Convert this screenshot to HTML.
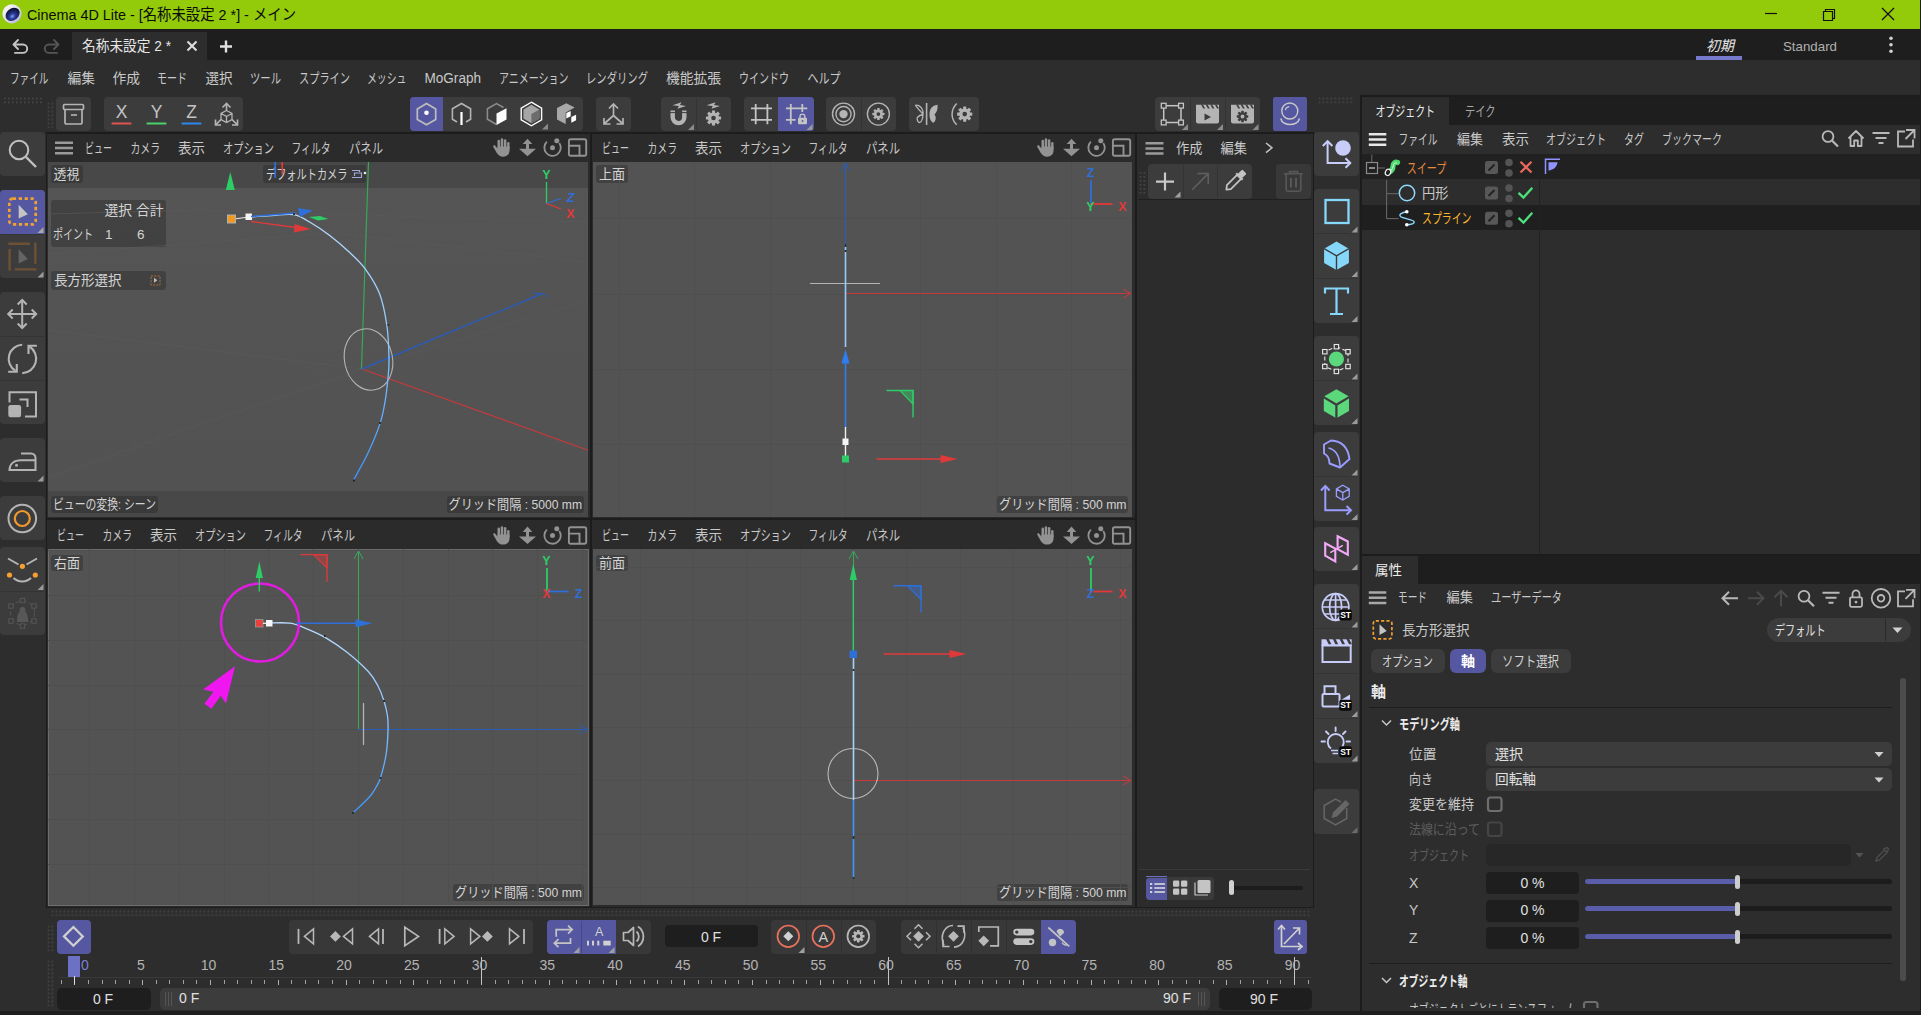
<!DOCTYPE html>
<html lang="ja"><head><meta charset="utf-8"><title>Cinema 4D Lite - [名称未設定 2 *] - メイン</title>
<style>
html,body{margin:0;padding:0;background:#2d2d2d;overflow:hidden}
body{width:1921px;height:1015px;position:relative;font-family:"Liberation Sans","Noto Sans CJK JP",sans-serif}
#app{position:absolute;left:0;top:0;width:1921px;height:1015px;overflow:hidden;background:#2d2d2d}
#app section{position:absolute;left:0;top:0;width:1921px;height:1015px;margin:0;padding:0}
#app div{position:absolute;box-sizing:border-box}
.ov{position:absolute;left:0;top:0}
.ov text{font-family:"Liberation Sans","Noto Sans CJK JP",sans-serif;white-space:pre}
</style></head><body>
<div id="app">
<section id="titlebar">
<div style="left:0px;top:0px;width:1921px;height:29px;background:#93ca09;"></div>
<svg class="ov" width="1921" height="1015" viewBox="0 0 1921 1015">
<text x="27.0" y="20.1" font-size="15.5" fill="#0c0c0c" textLength="269.0" lengthAdjust="spacingAndGlyphs">Cinema 4D Lite - [名称未設定 2 *] - メイン</text>
<defs><radialGradient id="c4d" cx=".4" cy=".62" r=".6"><stop offset="0" stop-color="#7fa0f0"/><stop offset=".35" stop-color="#2b3a9a"/><stop offset="1" stop-color="#0c0e2e"/></radialGradient><linearGradient id="c4r" x1="0" y1="0" x2="1" y2="1"><stop offset="0" stop-color="#ffffff"/><stop offset=".6" stop-color="#d8d8e4"/><stop offset="1" stop-color="#a8a8d8"/></linearGradient></defs><circle cx="12" cy="13.800" r="9.600" fill="url(#c4r)"/><ellipse cx="12.600" cy="14.300" rx="7.600" ry="5.900" transform="rotate(-38 12.600 14.300)" fill="url(#c4d)"/>
<path d="M1765 13.5h12" stroke="#111" stroke-width="1.2" fill="none"/>
<path d="M1823.5 11.5h9v9h-9z M1825.5 11.5v-2h9v9h-2" stroke="#111" stroke-width="1.2" fill="none"/>
<path d="M1882 8l12 12M1894 8l-12 12" stroke="#111" stroke-width="1.3" fill="none"/>
</svg>
</section>
<section id="tabbar">
<div style="left:0px;top:29px;width:1921px;height:31px;background:#1e1e1e;"></div>
<div style="left:72px;top:32px;width:135px;height:28px;background:#2d2d2d;"></div>
<div style="left:1696px;top:56px;width:46px;height:4px;background:#7679cc;"></div>
<svg class="ov" width="1921" height="1015" viewBox="0 0 1921 1015">
<text x="82.0" y="51.2" font-size="14.5" fill="#e6e6e6" textLength="89.0" lengthAdjust="spacingAndGlyphs">名称未設定 2 *</text>
<path d="M187.5 41.5l9 9M196.5 41.5l-9 9" stroke="#e0e0e0" stroke-width="2" fill="none"/>
<path d="M220 46.5h12M226 40.5v12" stroke="#e0e0e0" stroke-width="2.4" fill="none"/>
<path d="M18 40l-4.5 4.5 4.5 4.5M14 44.5h9a4.2 4.2 0 0 1 0 8.4h-8" stroke="#c4c4c4" stroke-width="1.9" fill="none" stroke-linecap="round" stroke-linejoin="round"/>
<path d="M54 40l4.5 4.5-4.5 4.5M58 44.5h-9a4.2 4.2 0 0 0 0 8.4h8" stroke="#555" stroke-width="1.9" fill="none" stroke-linecap="round" stroke-linejoin="round"/>
<text x="1706.0" y="51.2" font-size="14.5" fill="#e6e6e6" textLength="28.0" lengthAdjust="spacingAndGlyphs" font-style="italic">初期</text>
<text x="1783.0" y="50.9" font-size="13.5" fill="#b0b0b0" textLength="54.0" lengthAdjust="spacingAndGlyphs">Standard</text>
<circle cx="1891" cy="38.2" r="1.8" fill="#d0d0d0"/><circle cx="1891" cy="44.7" r="1.8" fill="#d0d0d0"/><circle cx="1891" cy="51.2" r="1.8" fill="#d0d0d0"/>
</svg>
</section>
<section id="menubar">

<svg class="ov" width="1921" height="1015" viewBox="0 0 1921 1015">
<text x="10.0" y="83.0" font-size="14" fill="#c9c9c9" textLength="38.5" lengthAdjust="spacingAndGlyphs">ファイル</text>
<text x="67.5" y="83.0" font-size="14" fill="#c9c9c9" textLength="27.5" lengthAdjust="spacingAndGlyphs">編集</text>
<text x="112.5" y="83.0" font-size="14" fill="#c9c9c9" textLength="27.5" lengthAdjust="spacingAndGlyphs">作成</text>
<text x="157.0" y="83.0" font-size="14" fill="#c9c9c9" textLength="30.0" lengthAdjust="spacingAndGlyphs">モード</text>
<text x="205.5" y="83.0" font-size="14" fill="#c9c9c9" textLength="27.0" lengthAdjust="spacingAndGlyphs">選択</text>
<text x="250.0" y="83.0" font-size="14" fill="#c9c9c9" textLength="31.0" lengthAdjust="spacingAndGlyphs">ツール</text>
<text x="299.0" y="83.0" font-size="14" fill="#c9c9c9" textLength="51.0" lengthAdjust="spacingAndGlyphs">スプライン</text>
<text x="367.0" y="83.0" font-size="14" fill="#c9c9c9" textLength="39.5" lengthAdjust="spacingAndGlyphs">メッシュ</text>
<text x="424.5" y="83.0" font-size="14" fill="#c9c9c9" textLength="56.5" lengthAdjust="spacingAndGlyphs">MoGraph</text>
<text x="499.0" y="83.0" font-size="14" fill="#c9c9c9" textLength="69.5" lengthAdjust="spacingAndGlyphs">アニメーション</text>
<text x="586.0" y="83.0" font-size="14" fill="#c9c9c9" textLength="62.0" lengthAdjust="spacingAndGlyphs">レンダリング</text>
<text x="666.0" y="83.0" font-size="14" fill="#c9c9c9" textLength="55.0" lengthAdjust="spacingAndGlyphs">機能拡張</text>
<text x="739.0" y="83.0" font-size="14" fill="#c9c9c9" textLength="50.0" lengthAdjust="spacingAndGlyphs">ウインドウ</text>
<text x="807.5" y="83.0" font-size="14" fill="#c9c9c9" textLength="33.0" lengthAdjust="spacingAndGlyphs">ヘルプ</text>
</svg>
</section>
<section id="toolbar">
<div style="left:56px;top:97px;width:35px;height:34px;background:#3c3c3c;border-radius:4px;"></div>
<div style="left:104px;top:97px;width:139px;height:34px;background:#3c3c3c;border-radius:4px;"></div>
<div style="left:410px;top:97px;width:173px;height:34px;background:#3c3c3c;border-radius:4px;"></div>
<div style="left:410px;top:97px;width:33px;height:34px;background:#5558a0;border-radius:4px 0 0 4px;"></div>
<div style="left:596px;top:97px;width:35px;height:34px;background:#3c3c3c;border-radius:4px;"></div>
<div style="left:661px;top:97px;width:70px;height:34px;background:#3c3c3c;border-radius:4px;"></div>
<div style="left:695.5px;top:98px;width:1px;height:32px;background:#333;"></div>
<div style="left:744px;top:97px;width:70px;height:34px;background:#3c3c3c;border-radius:4px;"></div>
<div style="left:778px;top:97px;width:36px;height:34px;background:#5558a0;border-radius:0 4px 4px 0;"></div>
<div style="left:826px;top:97px;width:70px;height:34px;background:#3c3c3c;border-radius:4px;"></div>
<div style="left:860.5px;top:98px;width:1px;height:32px;background:#333;"></div>
<div style="left:909px;top:97px;width:70px;height:34px;background:#3c3c3c;border-radius:4px;"></div>
<div style="left:1155px;top:97px;width:105px;height:34px;background:#3c3c3c;border-radius:4px;"></div>
<div style="left:1189.5px;top:98px;width:1px;height:32px;background:#333;"></div>
<div style="left:1224.5px;top:98px;width:1px;height:32px;background:#333;"></div>
<div style="left:1273px;top:97px;width:34px;height:34px;background:#5558a0;border-radius:2px;"></div>
<svg class="ov" width="1921" height="1015" viewBox="0 0 1921 1015">
<defs><pattern id="dp" x="0" y="0" width="4" height="4" patternUnits="userSpaceOnUse"><rect x="0" y="0" width="1.700" height="1.700" fill="#484848"/></pattern></defs>
<g transform="translate(4 97.5)"><rect x="0" y="0" width="38" height="6" fill="url(#dp)"/></g>
<g transform="translate(47.5 102.5)"><rect x="0" y="0" width="6" height="26" fill="url(#dp)"/></g>
<g transform="translate(1318.5 97.5)"><rect x="0" y="0" width="34" height="6" fill="url(#dp)"/></g>
<rect x="63.5" y="104.5" width="20" height="5" rx="1.2" fill="none" stroke="#b4b4b4" stroke-width="1.7"/><path d="M65 109.5V122.5a1.5 1.5 0 0 0 1.5 1.5H80.5a1.5 1.5 0 0 0 1.5-1.5V109.5" fill="none" stroke="#b4b4b4" stroke-width="1.7"/><path d="M71 115h6" stroke="#b4b4b4" stroke-width="1.6"/>
<text x="121.5" y="117.6" font-size="17.5" fill="#c4c4c4" text-anchor="middle">X</text>
<path d="M112.5 123.5H130.5" stroke="#e0524e" stroke-width="2.2" stroke-linecap="round"/>
<text x="156.5" y="117.6" font-size="17.5" fill="#c4c4c4" text-anchor="middle">Y</text>
<path d="M147.5 123.5H165.5" stroke="#4cd06a" stroke-width="2.2" stroke-linecap="round"/>
<text x="191.5" y="117.6" font-size="17.5" fill="#c4c4c4" text-anchor="middle">Z</text>
<path d="M182.5 123.5H200.5" stroke="#2f86ee" stroke-width="2.2" stroke-linecap="round"/>
<g fill="none" stroke="#b4b4b4" stroke-width="1.3"><path d="M226.5 110.5V104M222.5 107.5L226.5 103.5L230.5 107.5" stroke-width="1.6"/><path d="M226.5 110.5L232 113.5V119.5L226.5 122.5L221 119.5V113.5ZM226.5 122.5V116.5L221 113.5M226.5 116.5L232 113.5"/><path d="M221 119.5L216 124.5M215.5 119.5V125H221M232 119.5L237 124.5M237.5 119.5V125H232" stroke-width="1.7"/></g>
<path d="M426.5 103.6L435.7 108.9L435.7 119.5L426.5 124.8L417.3 119.5L417.3 108.9Z" fill="none" stroke="#bdbdbd" stroke-width="1.7"/><circle cx="426.5" cy="112.8" r="2.3" fill="#fff"/>
<path d="M466 122L470.6 119.2L470.6 108.8L461.5 103.5L452.4 108.8L452.4 119.2L457 122" fill="none" stroke="#b4b4b4" stroke-width="1.6"/><path d="M461.5 112V125" stroke="#fff" stroke-width="2.2"/>
<path d="M496.5 124.5L487.4 119.2L487.4 108.8L496.5 103.5L503.5 107.5" fill="none" stroke="#8c8c8c" stroke-width="1.5"/><path d="M496.5 113.5L506.5 108.2V119.5L496.5 125Z" fill="#fff"/>
<path d="M531.4 102.2L541.6 108.1L541.6 119.9L531.4 125.8L521.2 119.9L521.2 108.1Z" fill="none" stroke="#fff" stroke-width="1.4"/>
<path d="M531.4 104.8L539.4 109.4L539.4 118.6L531.4 123.2L523.4 118.6L523.4 109.4Z" fill="#a6a6a6"/><path d="M531.4 114L539.4 109.4L539.4 118.6L531.4 123.2Z" fill="#6c6c6c"/>
<path d="M548 123.5V129.5H542Z" fill="#8a8a8a"/>
<path d="M557 108.100L566.300 103.300L574.700 107.500L565.700 112.600V124.100L557 119.600Z" fill="#a8a8a8"/><path d="M566.300 112.900L570.700 110.900V116.200L566.300 118.500ZM571.300 117.100L576.100 114.800V120.200L571.300 122.700Z" fill="#fff"/>
<g fill="none" stroke="#b4b4b4" stroke-width="1.7"><path d="M613.5 115.5V104M609 108.5L613.5 104L618 108.5"/><path d="M613.5 115.5L604.5 123.5M604 118V124H610.5"/><path d="M613.5 115.5L622.5 123.5M623 118V124H616.5"/></g>
<path d="M672.7 110.5V117.3a5.8 5.8 0 0 0 11.6 0V110.5" fill="none" stroke="#b4b4b4" stroke-width="4.4"/><path d="M670 112.6h5.5M681.5 112.6h5.5" stroke="#3c3c3c" stroke-width="1"/>
<path d="M672.5 105.3L681.5 102.3L680 105.0L686 106.1L677.5 108.7L678.8 106.1Z" fill="#b4b4b4"/>
<path d="M694 124V130H688Z" fill="#8a8a8a"/>
<g transform="translate(713.5 118)" fill="#b4b4b4"><circle r="5.62"/><rect x="-1.60" y="-7.60" width="3.19" height="3.80" rx="0.4" transform="rotate(0.0)"/><rect x="-1.60" y="-7.60" width="3.19" height="3.80" rx="0.4" transform="rotate(45.0)"/><rect x="-1.60" y="-7.60" width="3.19" height="3.80" rx="0.4" transform="rotate(90.0)"/><rect x="-1.60" y="-7.60" width="3.19" height="3.80" rx="0.4" transform="rotate(135.0)"/><rect x="-1.60" y="-7.60" width="3.19" height="3.80" rx="0.4" transform="rotate(180.0)"/><rect x="-1.60" y="-7.60" width="3.19" height="3.80" rx="0.4" transform="rotate(225.0)"/><rect x="-1.60" y="-7.60" width="3.19" height="3.80" rx="0.4" transform="rotate(270.0)"/><rect x="-1.60" y="-7.60" width="3.19" height="3.80" rx="0.4" transform="rotate(315.0)"/><circle r="2.30" fill="#3c3c3c"/></g>
<path d="M706.5 105.3L715.5 102.3L714 105.0L720 106.1L711.5 108.7L712.8 106.1Z" fill="#b4b4b4"/>
<path d="M755.7 104V124.3M767.4 104V124.3M751 108.4H772M751 119.9H772" stroke="#c4c4c4" stroke-width="1.8" fill="none"/>
<path d="M790.8 104V124.3M802.3 104V112M786 108.4H807.3M786 119.9H795.5" stroke="#c4c4c4" stroke-width="1.8" fill="none"/>
<rect x="798" y="117.7" width="9" height="6.5" rx="1" fill="#c4c4c4"/><path d="M800 118V116.5a2.4 2.4 0 0 1 4.8 0V118" fill="none" stroke="#c4c4c4" stroke-width="1.4"/><circle cx="802.5" cy="121" r="0.9" fill="#5558a0"/>
<path d="M812.5 124V130H806.5Z" fill="#9a9a9a"/>
<circle cx="843.5" cy="114.1" r="11" fill="none" stroke="#b4b4b4" stroke-width="1.4"/><circle cx="843.5" cy="114.1" r="7.6" fill="none" stroke="#b4b4b4" stroke-width="1.4"/><circle cx="843.5" cy="114.1" r="4.2" fill="#b4b4b4"/>
<circle cx="878.4" cy="114.1" r="11" fill="none" stroke="#b4b4b4" stroke-width="1.4"/>
<g transform="translate(878.4 114.1)" fill="#b4b4b4"><circle r="4.44"/><rect x="-1.26" y="-6.00" width="2.52" height="3.00" rx="0.4" transform="rotate(0.0)"/><rect x="-1.26" y="-6.00" width="2.52" height="3.00" rx="0.4" transform="rotate(45.0)"/><rect x="-1.26" y="-6.00" width="2.52" height="3.00" rx="0.4" transform="rotate(90.0)"/><rect x="-1.26" y="-6.00" width="2.52" height="3.00" rx="0.4" transform="rotate(135.0)"/><rect x="-1.26" y="-6.00" width="2.52" height="3.00" rx="0.4" transform="rotate(180.0)"/><rect x="-1.26" y="-6.00" width="2.52" height="3.00" rx="0.4" transform="rotate(225.0)"/><rect x="-1.26" y="-6.00" width="2.52" height="3.00" rx="0.4" transform="rotate(270.0)"/><rect x="-1.26" y="-6.00" width="2.52" height="3.00" rx="0.4" transform="rotate(315.0)"/><circle r="1.90" fill="#3c3c3c"/></g>
<path d="M926.6 103V125" stroke="#b4b4b4" stroke-width="1.6"/>
<path d="M923 114C919 110 916 106 915.5 105.3C917.5 104.5 921 106 922.5 110C923.2 111.5 923.2 113 923 114ZM923 114.5C922.8 119 921.5 122 919.5 122.6C917.8 122.2 916.8 119.5 917.3 117.5C919 115.5 921 114.8 923 114.5Z" fill="none" stroke="#b4b4b4" stroke-width="1.3" stroke-linejoin="round"/>
<path d="M929.5 114.5C929.5 109 932 105.5 937.5 104.8C938 108.5 937 112.5 934.5 114.5C936.5 117 936 121 933.5 122.8C930.5 121.5 929.5 118 929.5 114.5Z" fill="#b4b4b4"/>
<path d="M956.7 103.5C950.5 110 950.5 118.5 956.7 124.8" fill="none" stroke="#b4b4b4" stroke-width="1.5"/>
<g transform="translate(964.7 114.1)" fill="#b4b4b4"><circle r="5.62"/><rect x="-1.60" y="-7.60" width="3.19" height="3.80" rx="0.4" transform="rotate(0.0)"/><rect x="-1.60" y="-7.60" width="3.19" height="3.80" rx="0.4" transform="rotate(45.0)"/><rect x="-1.60" y="-7.60" width="3.19" height="3.80" rx="0.4" transform="rotate(90.0)"/><rect x="-1.60" y="-7.60" width="3.19" height="3.80" rx="0.4" transform="rotate(135.0)"/><rect x="-1.60" y="-7.60" width="3.19" height="3.80" rx="0.4" transform="rotate(180.0)"/><rect x="-1.60" y="-7.60" width="3.19" height="3.80" rx="0.4" transform="rotate(225.0)"/><rect x="-1.60" y="-7.60" width="3.19" height="3.80" rx="0.4" transform="rotate(270.0)"/><rect x="-1.60" y="-7.60" width="3.19" height="3.80" rx="0.4" transform="rotate(315.0)"/><circle r="2.30" fill="#3c3c3c"/></g>
<rect x="1163.7" y="105.7" width="17.3" height="16.8" fill="none" stroke="#c4c4c4" stroke-width="1.5"/>
<rect x="1161.3" y="103.3" width="4.8" height="4.8" fill="#3c3c3c" stroke="#c4c4c4" stroke-width="1.3"/>
<rect x="1178.6" y="103.3" width="4.8" height="4.8" fill="#3c3c3c" stroke="#c4c4c4" stroke-width="1.3"/>
<rect x="1161.3" y="120.1" width="4.8" height="4.8" fill="#3c3c3c" stroke="#c4c4c4" stroke-width="1.3"/>
<rect x="1178.6" y="120.1" width="4.8" height="4.8" fill="#3c3c3c" stroke="#c4c4c4" stroke-width="1.3"/>
<path d="M1188 124V130H1182Z" fill="#8a8a8a"/>
<path d="M1196 104.8H1219V121.4a2 2 0 0 1-2 2H1198a2 2 0 0 1-2-2Z" fill="#b4b4b4"/>
<path d="M1201.0 104.5L1203.3 108.6H1205.2L1202.9 104.5Z" fill="#3c3c3c"/>
<path d="M1205.6 104.5L1207.9 108.6H1209.8L1207.5 104.5Z" fill="#3c3c3c"/>
<path d="M1210.2 104.5L1212.5 108.6H1214.4L1212.1 104.5Z" fill="#3c3c3c"/>
<path d="M1214.8 104.5L1217.1 108.6H1219.0L1216.7 104.5Z" fill="#3c3c3c"/>
<path d="M1204.5 113.5V120.5L1211 117Z" fill="#3c3c3c"/>
<path d="M1223 124V130H1217Z" fill="#8a8a8a"/>
<path d="M1231 104.8H1254V121.4a2 2 0 0 1-2 2H1233a2 2 0 0 1-2-2Z" fill="#b4b4b4"/>
<path d="M1236.0 104.5L1238.3 108.6H1240.2L1237.9 104.5Z" fill="#3c3c3c"/>
<path d="M1240.6 104.5L1242.9 108.6H1244.8L1242.5 104.5Z" fill="#3c3c3c"/>
<path d="M1245.2 104.5L1247.5 108.6H1249.4L1247.1 104.5Z" fill="#3c3c3c"/>
<path d="M1249.8 104.5L1252.1 108.6H1254.0L1251.7 104.5Z" fill="#3c3c3c"/>
<g transform="translate(1242.5 116.5)" fill="#3c3c3c"><circle r="4.29"/><rect x="-1.22" y="-5.80" width="2.44" height="2.90" rx="0.4" transform="rotate(0.0)"/><rect x="-1.22" y="-5.80" width="2.44" height="2.90" rx="0.4" transform="rotate(45.0)"/><rect x="-1.22" y="-5.80" width="2.44" height="2.90" rx="0.4" transform="rotate(90.0)"/><rect x="-1.22" y="-5.80" width="2.44" height="2.90" rx="0.4" transform="rotate(135.0)"/><rect x="-1.22" y="-5.80" width="2.44" height="2.90" rx="0.4" transform="rotate(180.0)"/><rect x="-1.22" y="-5.80" width="2.44" height="2.90" rx="0.4" transform="rotate(225.0)"/><rect x="-1.22" y="-5.80" width="2.44" height="2.90" rx="0.4" transform="rotate(270.0)"/><rect x="-1.22" y="-5.80" width="2.44" height="2.90" rx="0.4" transform="rotate(315.0)"/><circle r="1.90" fill="#b4b4b4"/></g>
<path d="M1258.5 124V130H1252.5Z" fill="#8a8a8a"/>
<circle cx="1289.8" cy="111" r="8" fill="none" stroke="#c8c8c8" stroke-width="1.4"/><path d="M1285.2 110.2a4.6 4.6 0 0 1 4-3.6" fill="none" stroke="#c8c8c8" stroke-width="1.1"/><path d="M1280.8 118.5c1.5 8 17 8 18.6 0" fill="none" stroke="#c8c8c8" stroke-width="1.5"/>
</svg>
</section>
<section id="left-palette">
<div style="left:0px;top:132px;width:45px;height:44px;background:#3c3c3c;border-radius:4px;"></div>
<div style="left:0px;top:190px;width:45px;height:88px;background:#3c3c3c;border-radius:4px;"></div>
<div style="left:1px;top:233.5px;width:43px;height:1px;background:#343434;"></div>
<div style="left:0px;top:190px;width:45px;height:44px;background:#5558a0;border-radius:4px 4px 0 0;"></div>
<div style="left:0px;top:292px;width:45px;height:132px;background:#3c3c3c;border-radius:4px;"></div>
<div style="left:1px;top:335.5px;width:43px;height:1px;background:#343434;"></div>
<div style="left:1px;top:379.5px;width:43px;height:1px;background:#343434;"></div>
<div style="left:0px;top:438px;width:45px;height:44px;background:#3c3c3c;border-radius:4px;"></div>
<div style="left:0px;top:496px;width:45px;height:44px;background:#3c3c3c;border-radius:4px;"></div>
<div style="left:0px;top:547px;width:45px;height:88px;background:#3c3c3c;border-radius:4px;"></div>
<div style="left:1px;top:590.5px;width:43px;height:1px;background:#343434;"></div>
<svg class="ov" width="1921" height="1015" viewBox="0 0 1921 1015">
<circle cx="19" cy="150" r="9.3" fill="none" stroke="#c0c0c0" stroke-width="2"/><path d="M26 157L36 167" stroke="#c0c0c0" stroke-width="2.4"/>
<rect x="9.3" y="198.6" width="26.4" height="25.8" rx="3.5" fill="none" stroke="#f0a233" stroke-width="2.7" stroke-dasharray="3.3 2.6"/><path d="M18.7 204.7V218.5L27.8 214.3Z" fill="#c4c4c4"/>
<path d="M43.5 227V233H37.5Z" fill="#a8a8a8"/>
<path d="M8.4 243.8H30M35.3 242.6V263.8M9.6 249V270.7M14.8 269.4H36.5" stroke="#6e5134" stroke-width="2.4" fill="none"/><path d="M18.7 249.3V263.5L27.8 259Z" fill="#646464"/>
<path d="M43.5 271.5V277.5H37.5Z" fill="#9a9a9a"/>
<g fill="none" stroke="#b4b4b4" stroke-width="2"><path d="M22.2 300V328M8.2 314H36.2"/><path d="M17.7 304.5L22.2 300L26.7 304.5M17.7 323.5L22.2 328L26.7 323.5M12.7 309.5L8.2 314L12.7 318.5M31.7 309.5L36.2 314L31.7 318.5"/></g>
<g fill="none" stroke="#b4b4b4" stroke-width="2.1"><path d="M22.2 344.8A14 14 0 0 0 15.500 370.800"/><path d="M16.800 364V371.700H8.200"/><path d="M22.200 373.200A14.500 14.500 0 0 0 29.500 346.500"/><path d="M36.900 345.700H28.500V353.900"/></g>
<g fill="none" stroke="#b4b4b4" stroke-width="2"><path d="M9.5 402.5V392.2H36V416.5H25"/><path d="M19.5 399.5H27.5V407"/></g><rect x="8.3" y="405" width="12.8" height="12.3" rx="2.2" fill="#b4b4b4"/>
<path d="M21 453.5H31a4.5 4.5 0 0 1 4.5 4.5V470H9.5C9.5 464 14 460.3 21 460.3H35.5" fill="none" stroke="#b4b4b4" stroke-width="2"/><circle cx="16.5" cy="465.3" r="1.5" fill="#b4b4b4"/>
<path d="M43.5 475.5V481.5H37.5Z" fill="#9a9a9a"/>
<circle cx="22.3" cy="518.5" r="13.8" fill="none" stroke="#b4b4b4" stroke-width="2"/><circle cx="22.3" cy="518.5" r="7.5" fill="none" stroke="#f09a2e" stroke-width="2.2"/>
<path d="M8 558.5L18.5 564.5M26.5 564.5L37 558.5" stroke="#b4b4b4" stroke-width="2" fill="none"/><path d="M13.5 578C18 582.5 26.5 582.5 31 578" stroke="#b4b4b4" stroke-width="2" fill="none"/><circle cx="22.4" cy="566.3" r="2.6" fill="#f5a030"/><circle cx="9.5" cy="575" r="2.6" fill="#f5a030"/><circle cx="35.3" cy="575" r="2.6" fill="#f5a030"/>
<path d="M43.5 584V590H37.5Z" fill="#9a9a9a"/>
<circle cx="22.5" cy="613" r="12" fill="none" stroke="#575757" stroke-width="1" stroke-dasharray="4 3"/>
<rect x="20.3" y="598.3" width="4.4" height="4.4" fill="#3c3c3c" stroke="#575757" stroke-width="1"/>
<rect x="20.3" y="623.8" width="4.4" height="4.4" fill="#3c3c3c" stroke="#575757" stroke-width="1"/>
<rect x="8.8" y="603.8" width="4.4" height="4.4" fill="#3c3c3c" stroke="#575757" stroke-width="1"/>
<rect x="31.8" y="603.8" width="4.4" height="4.4" fill="#3c3c3c" stroke="#575757" stroke-width="1"/>
<rect x="8.8" y="618.8" width="4.4" height="4.4" fill="#3c3c3c" stroke="#575757" stroke-width="1"/>
<rect x="31.8" y="618.8" width="4.4" height="4.4" fill="#3c3c3c" stroke="#575757" stroke-width="1"/>
<path d="M17 622C17 616 18 612.5 20 611.5a3 3 0 1 1 5 0C27 612.5 28 616 28.5 622Z" fill="#575757"/>
</svg>
</section>
<section id="viewports">
<div style="left:45.5px;top:132px;width:1090px;height:775.5px;background:#1c1c1c;"></div>
<div style="left:46.5px;top:133.5px;width:543px;height:384.5px;background:#2b2b2b;"></div>
<div style="left:591.5px;top:133.5px;width:543px;height:384.5px;background:#2b2b2b;"></div>
<div style="left:46.5px;top:519.5px;width:543px;height:387px;background:#2b2b2b;"></div>
<div style="left:591.5px;top:519.5px;width:543px;height:387px;background:#2b2b2b;"></div>
<div style="left:48px;top:162px;width:540px;height:355px;background:#535353;background:linear-gradient(#555555,#525252);"></div>
<div style="left:48px;top:162px;width:540px;height:26px;background:#484848;"></div>
<div style="left:48px;top:491px;width:540px;height:26px;background:#484848;"></div>
<div style="left:50.5px;top:165px;width:32px;height:17.5px;background:rgba(40,40,40,.42);border-radius:3px;"></div>
<div style="left:263px;top:165px;width:103px;height:17.5px;background:rgba(40,40,40,.42);border-radius:3px;"></div>
<div style="left:51px;top:200px;width:115px;height:46.5px;background:rgba(40,40,40,.42);border-radius:3px;"></div>
<div style="left:51px;top:271px;width:114.5px;height:18.5px;background:rgba(40,40,40,.42);border-radius:3px;"></div>
<div style="left:51px;top:495.5px;width:106.5px;height:17.5px;background:rgba(40,40,40,.42);border-radius:3px;"></div>
<div style="left:446.5px;top:495.5px;width:137px;height:17.5px;background:rgba(40,40,40,.42);border-radius:3px;"></div>
<div style="left:593px;top:162px;width:539px;height:355px;background:#535353;"></div>
<div style="left:596px;top:165px;width:32px;height:17.5px;background:rgba(40,40,40,.42);border-radius:3px;"></div>
<div style="left:997px;top:495.5px;width:131px;height:17.5px;background:rgba(40,40,40,.42);border-radius:3px;"></div>
<div style="left:48px;top:549px;width:540px;height:356px;background:#535353;"></div>
<div style="left:47.5px;top:549px;width:541px;height:356.5px;background:transparent;border:1px solid #6c6c6c;"></div>
<div style="left:51px;top:554.5px;width:32px;height:16.5px;background:rgba(40,40,40,.42);border-radius:3px;"></div>
<div style="left:453px;top:883.5px;width:130.5px;height:17.5px;background:rgba(40,40,40,.42);border-radius:3px;"></div>
<div style="left:593px;top:549px;width:539px;height:356px;background:#535353;"></div>
<div style="left:596px;top:554.5px;width:32px;height:16.5px;background:rgba(40,40,40,.42);border-radius:3px;"></div>
<div style="left:997px;top:883.5px;width:131px;height:17.5px;background:rgba(40,40,40,.42);border-radius:3px;"></div>
<svg class="ov" width="1921" height="1015" viewBox="0 0 1921 1015">
<path d="M55 142.8h18M55 148.0h18M55 153.3h18" stroke="#9a9a9a" stroke-width="2.500"/>
<text x="85.0" y="152.7" font-size="14" fill="#c9c9c9" textLength="27.0" lengthAdjust="spacingAndGlyphs">ビュー</text>
<text x="130.5" y="152.7" font-size="14" fill="#c9c9c9" textLength="29.5" lengthAdjust="spacingAndGlyphs">カメラ</text>
<text x="178.0" y="152.7" font-size="14" fill="#c9c9c9" textLength="27.0" lengthAdjust="spacingAndGlyphs">表示</text>
<text x="223.0" y="152.7" font-size="14" fill="#c9c9c9" textLength="51.0" lengthAdjust="spacingAndGlyphs">オプション</text>
<text x="291.5" y="152.7" font-size="14" fill="#c9c9c9" textLength="39.0" lengthAdjust="spacingAndGlyphs">フィルタ</text>
<text x="349.0" y="152.7" font-size="14" fill="#c9c9c9" textLength="34.0" lengthAdjust="spacingAndGlyphs">パネル</text>
<g transform="translate(502 147.5)" ><g fill="#929292"><rect x="-4.500" y="-7.800" width="2.500" height="10" rx="1.250"/><rect x="-1.300" y="-9.200" width="2.500" height="11" rx="1.250"/><rect x="1.900" y="-8.300" width="2.500" height="10" rx="1.250"/><rect x="5.100" y="-5.400" width="2.400" height="8" rx="1.200"/><path d="M-4.500 -1H7.500V3C7.500 7 4.500 9.200 1.300 9.200C-2 9.200 -4 7.600 -5.500 5L-8.700 -0.600C-9.200 -1.900 -7.600 -2.700 -6.700 -1.700L-4.500 1.300Z"/></g></g>
<g transform="translate(527.5 147.5)" ><path d="M0 -8.800L4.800 -3.500H1.500V1.200H8.500L0 8.700L-8.500 1.200H-1.500V-3.500H-4.800Z" fill="#929292"/></g>
<g transform="translate(552.5 147.5)" ><path d="M-5.600 -5.800A8.200 8.200 0 1 0 6.800 -4.500" fill="none" stroke="#929292" stroke-width="1.800"/><circle cy="0.200" r="2.500" fill="#929292"/><circle cx="4.300" cy="-6.700" r="2.500" fill="#929292"/></g>
<g transform="translate(577.5 147.5)" ><rect x="-8.600" y="-8.200" width="17.300" height="16.500" rx="1.800" fill="none" stroke="#929292" stroke-width="1.900"/><path d="M-8.600 -1.800H2V8.300" fill="none" stroke="#929292" stroke-width="1.900"/></g>
<g stroke="#5c5c5c" stroke-width="1" opacity=".55" fill="none"><path d="M48 254L333 233L588 262"/><path d="M48 214L200 210L588 222"/><path d="M48 330L362 369L588 300"/><path d="M48 477L362 369"/><path d="M48 290L588 450" opacity=".5"/></g>
<path d="M368.5 162L361.5 369" stroke="#3aa657" stroke-width="1.2"/>
<path d="M362 369L588 450.2" stroke="#c8393b" stroke-width="1.1"/>
<path d="M362 369L542.5 293.5" stroke="#2a5cb8" stroke-width="1.4"/><path d="M531 293L542.5 293.5L548 297" fill="none" stroke="#2a5cb8" stroke-width="1"/>
<ellipse cx="368.5" cy="359.5" rx="24" ry="31" fill="none" stroke="#b4b4b4" stroke-width="1.1" transform="rotate(-12 368.5 359.5)"/>
<defs><linearGradient id="sp1" x1="0" y1="0" x2="0" y2="1"><stop offset="0" stop-color="#b8dcff"/><stop offset=".5" stop-color="#8cc6ff"/><stop offset="1" stop-color="#3a94ff"/></linearGradient></defs>
<path d="M249.0 217.0C252.8 216.8 264.5 216.0 272.0 215.6C279.5 215.2 287.3 213.4 294.0 214.7C300.7 216.0 306.1 220.1 312.0 223.5C317.9 226.9 323.4 230.6 329.4 235.2C335.4 239.8 342.1 245.4 348.0 251.0C353.9 256.6 359.8 261.5 365.0 268.6C370.2 275.7 375.9 284.2 379.5 293.6C383.1 303.0 385.2 314.3 386.8 325.0C388.4 335.7 388.8 349.2 389.0 358.0C389.2 366.8 388.7 370.7 388.0 378.0C387.3 385.3 386.3 394.4 385.0 402.0C383.7 409.6 382.8 415.1 380.0 423.6C377.2 432.1 372.4 443.6 368.0 453.0C363.6 462.4 356.0 475.5 353.6 480.0" fill="none" stroke="url(#sp1)" stroke-width="1.3"/>
<path d="M234 219L249 217" stroke="#e8e8e8" stroke-width="1.2"/><rect x="227.5" y="215" width="8" height="8" fill="#f09a1e" stroke="#b0b0b0" stroke-width="1"/><rect x="245.5" y="213.5" width="6.5" height="6.5" fill="#f4f4f4"/>
<path d="M251 216.5L296 213" stroke="#2f6fd8" stroke-width="1.5"/><path d="M313 210.5L298 208L300 217Z" fill="#2f6fd8"/>
<path d="M309 217L320 216L328.5 219L318 220.5Z" fill="#2ecc66"/>
<path d="M251 221.5L296 227.5" stroke="#e0393a" stroke-width="1.4"/><path d="M311 229L294.5 224L294 232.5Z" fill="#e0393a"/>
<path d="M230.3 172L225.8 190H234.8Z" fill="#2ecc66"/>
<path d="M353 479.5h2v2h-2z" fill="#222"/><path d="M379 422h2v2h-2zM387.5 324h2v2h-2zM293 213h2v2h-2z" fill="#333"/>
<text x="546.5" y="179.0" font-size="12.5" fill="#2ecc66" font-weight="bold" text-anchor="middle">Y</text>
<path d="M546.5 182V203.5" stroke="#2ecc66" stroke-width="1.3"/><path d="M546.5 203.5L561 198.5" stroke="#2f6fd8" stroke-width="1.3"/><path d="M546.5 203.5L561 209" stroke="#e0393a" stroke-width="1.3"/>
<text x="570.5" y="201.5" font-size="12.5" fill="#2f6fd8" font-weight="bold" text-anchor="middle" font-style="italic">Z</text>
<text x="570.5" y="217.5" font-size="12.5" fill="#e0393a" font-weight="bold" text-anchor="middle">X</text>
<text x="53.5" y="178.6" font-size="13.5" fill="#d4d4d4" textLength="26.0" lengthAdjust="spacingAndGlyphs">透視</text>
<text x="266.0" y="178.6" font-size="13.5" fill="#d4d4d4" textLength="81.5" lengthAdjust="spacingAndGlyphs">デフォルトカメラ</text>
<path d="M275.2 162V178" stroke="#2f6fd8" stroke-width="1.7"/>
<path d="M282.2 162V174.5" stroke="#e0393a" stroke-width="1.7"/>
<path d="M352 170.5h7.5v1.5M352 177.5h9.5v-4.5h-7v3" fill="none" stroke="#9fa8d8" stroke-width="1.2"/><circle cx="365" cy="173" r="1.3" fill="#e8e8e8"/>
<text x="104.5" y="214.9" font-size="13.5" fill="#d4d4d4" textLength="59.0" lengthAdjust="spacingAndGlyphs">選択 合計</text>
<text x="53.0" y="239.4" font-size="13.5" fill="#d4d4d4" textLength="40.0" lengthAdjust="spacingAndGlyphs">ポイント</text>
<text x="105.0" y="239.4" font-size="13.5" fill="#d4d4d4">1</text>
<text x="137.0" y="239.4" font-size="13.5" fill="#d4d4d4">6</text>
<text x="54.0" y="285.1" font-size="13.5" fill="#d4d4d4" textLength="67.5" lengthAdjust="spacingAndGlyphs">長方形選択</text>
<rect x="151" y="276" width="9" height="9" fill="none" stroke="#a8703a" stroke-width="1" stroke-dasharray="2 1.3"/><path d="M154 277.8v5l3.4-2.5z" fill="#bdbdbd"/>
<text x="53.0" y="509.1" font-size="13.5" fill="#d4d4d4" textLength="103.0" lengthAdjust="spacingAndGlyphs">ビューの変換: シーン</text>
<text x="448.5" y="509.1" font-size="13.5" fill="#d4d4d4" textLength="133.5" lengthAdjust="spacingAndGlyphs">グリッド間隔 : 5000 mm</text>
<text x="602.0" y="152.7" font-size="14" fill="#c9c9c9" textLength="27.0" lengthAdjust="spacingAndGlyphs">ビュー</text>
<text x="647.5" y="152.7" font-size="14" fill="#c9c9c9" textLength="29.5" lengthAdjust="spacingAndGlyphs">カメラ</text>
<text x="695.0" y="152.7" font-size="14" fill="#c9c9c9" textLength="27.0" lengthAdjust="spacingAndGlyphs">表示</text>
<text x="740.0" y="152.7" font-size="14" fill="#c9c9c9" textLength="51.0" lengthAdjust="spacingAndGlyphs">オプション</text>
<text x="808.5" y="152.7" font-size="14" fill="#c9c9c9" textLength="39.0" lengthAdjust="spacingAndGlyphs">フィルタ</text>
<text x="866.0" y="152.7" font-size="14" fill="#c9c9c9" textLength="34.0" lengthAdjust="spacingAndGlyphs">パネル</text>
<g transform="translate(1046 147.5)" ><g fill="#929292"><rect x="-4.500" y="-7.800" width="2.500" height="10" rx="1.250"/><rect x="-1.300" y="-9.200" width="2.500" height="11" rx="1.250"/><rect x="1.900" y="-8.300" width="2.500" height="10" rx="1.250"/><rect x="5.100" y="-5.400" width="2.400" height="8" rx="1.200"/><path d="M-4.500 -1H7.500V3C7.500 7 4.500 9.200 1.300 9.200C-2 9.200 -4 7.600 -5.500 5L-8.700 -0.600C-9.200 -1.900 -7.600 -2.700 -6.700 -1.700L-4.500 1.300Z"/></g></g>
<g transform="translate(1071.5 147.5)" ><path d="M0 -8.800L4.800 -3.500H1.500V1.200H8.500L0 8.700L-8.500 1.200H-1.500V-3.500H-4.800Z" fill="#929292"/></g>
<g transform="translate(1096.5 147.5)" ><path d="M-5.600 -5.800A8.200 8.200 0 1 0 6.800 -4.500" fill="none" stroke="#929292" stroke-width="1.800"/><circle cy="0.200" r="2.500" fill="#929292"/><circle cx="4.300" cy="-6.700" r="2.500" fill="#929292"/></g>
<g transform="translate(1121.5 147.5)" ><rect x="-8.600" y="-8.200" width="17.300" height="16.500" rx="1.800" fill="none" stroke="#929292" stroke-width="1.900"/><path d="M-8.600 -1.800H2V8.300" fill="none" stroke="#929292" stroke-width="1.900"/></g>
<g shape-rendering="crispEdges">
<path d="M619.5 162V517" stroke="#4f4f4f" stroke-width="1"/>
<path d="M694.5 162V517" stroke="#4f4f4f" stroke-width="1"/>
<path d="M770.5 162V517" stroke="#4f4f4f" stroke-width="1"/>
<path d="M593 218.5H1132" stroke="#4f4f4f" stroke-width="1"/>
<path d="M845.5 162V517" stroke="#4f4f4f" stroke-width="1"/>
<path d="M593 294.5H1132" stroke="#4f4f4f" stroke-width="1"/>
<path d="M920.5 162V517" stroke="#4f4f4f" stroke-width="1"/>
<path d="M593 369.5H1132" stroke="#4f4f4f" stroke-width="1"/>
<path d="M996.5 162V517" stroke="#4f4f4f" stroke-width="1"/>
<path d="M593 444.5H1132" stroke="#4f4f4f" stroke-width="1"/>
<path d="M1071.5 162V517" stroke="#4f4f4f" stroke-width="1"/>
</g>
<path d="M845.5 163V294" stroke="#2a5cb8" stroke-width="1.2"/>
<path d="M841.0 171L845.5 163L850.0 171" fill="none" stroke="#2a5cb8" stroke-width="1"/>
<path d="M845 293.5H1130.5" stroke="#c8393b" stroke-width="1.1"/>
<path d="M1123 289.0L1131 293.5L1123 298.0" fill="none" stroke="#c8393b" stroke-width="1"/>
<path d="M810 283.5H880" stroke="#b4b4b4" stroke-width="1.2"/>
<path d="M845.5 244V347" stroke="#96ccfb" stroke-width="1.6"/>
<path d="M845.5 360V428" stroke="#2f7df0" stroke-width="1.6"/>
<path d="M845.5 349L841.5 363.5H849.5Z" fill="#2f7df0"/>
<path d="M845.5 427V457" stroke="#f0f0f0" stroke-width="1.4"/>
<rect x="842.5" y="438.5" width="6" height="6.5" fill="#f4f4f4"/>
<rect x="842" y="455.5" width="7" height="7" fill="#2ecc66"/>
<path d="M844.5 244h2v3h-2zM844.5 250h2v2h-2z" fill="#2a2a2a"/>
<path d="M886.5 390.5H913V417.5" fill="none" stroke="#2ecc66" stroke-width="1.4"/><path d="M900 390.5L913 404V390.5Z" fill="#2ecc66" fill-opacity=".45" stroke="#2ecc66" stroke-width="1.2"/>
<path d="M876.5 459H942.5" stroke="#e0393a" stroke-width="1.4"/><path d="M957.5 459L940.5 455V463Z" fill="#e0393a"/>
<text x="1090.5" y="177.0" font-size="12.5" fill="#2f6fd8" font-weight="bold" text-anchor="middle">Z</text>
<path d="M1091.0 180.5V204.0" stroke="#2f6fd8" stroke-width="1.8"/>
<path d="M1090.5 204.0H1112.5" stroke="#e0393a" stroke-width="1.8"/>
<text x="1122.5" y="210.5" font-size="12.5" fill="#e0393a" font-weight="bold" text-anchor="middle">X</text>
<text x="1090.5" y="210.5" font-size="12.5" fill="#2ecc66" font-weight="bold" text-anchor="middle">Y</text>
<text x="599.0" y="178.6" font-size="13.5" fill="#d4d4d4" textLength="26.0" lengthAdjust="spacingAndGlyphs">上面</text>
<text x="999.0" y="509.1" font-size="13.5" fill="#d4d4d4" textLength="127.5" lengthAdjust="spacingAndGlyphs">グリッド間隔 : 500 mm</text>
<text x="57.0" y="540.2" font-size="14" fill="#c9c9c9" textLength="27.0" lengthAdjust="spacingAndGlyphs">ビュー</text>
<text x="102.5" y="540.2" font-size="14" fill="#c9c9c9" textLength="29.5" lengthAdjust="spacingAndGlyphs">カメラ</text>
<text x="150.0" y="540.2" font-size="14" fill="#c9c9c9" textLength="27.0" lengthAdjust="spacingAndGlyphs">表示</text>
<text x="195.0" y="540.2" font-size="14" fill="#c9c9c9" textLength="51.0" lengthAdjust="spacingAndGlyphs">オプション</text>
<text x="263.5" y="540.2" font-size="14" fill="#c9c9c9" textLength="39.0" lengthAdjust="spacingAndGlyphs">フィルタ</text>
<text x="321.0" y="540.2" font-size="14" fill="#c9c9c9" textLength="34.0" lengthAdjust="spacingAndGlyphs">パネル</text>
<g transform="translate(502 535.4)" ><g fill="#929292"><rect x="-4.500" y="-7.800" width="2.500" height="10" rx="1.250"/><rect x="-1.300" y="-9.200" width="2.500" height="11" rx="1.250"/><rect x="1.900" y="-8.300" width="2.500" height="10" rx="1.250"/><rect x="5.100" y="-5.400" width="2.400" height="8" rx="1.200"/><path d="M-4.500 -1H7.500V3C7.500 7 4.500 9.200 1.300 9.200C-2 9.200 -4 7.600 -5.500 5L-8.700 -0.600C-9.200 -1.900 -7.600 -2.700 -6.700 -1.700L-4.500 1.300Z"/></g></g>
<g transform="translate(527.5 535.4)" ><path d="M0 -8.800L4.800 -3.500H1.500V1.200H8.500L0 8.700L-8.500 1.200H-1.500V-3.500H-4.800Z" fill="#929292"/></g>
<g transform="translate(552.5 535.4)" ><path d="M-5.600 -5.800A8.200 8.200 0 1 0 6.800 -4.500" fill="none" stroke="#929292" stroke-width="1.800"/><circle cy="0.200" r="2.500" fill="#929292"/><circle cx="4.300" cy="-6.700" r="2.500" fill="#929292"/></g>
<g transform="translate(577.5 535.4)" ><rect x="-8.600" y="-8.200" width="17.300" height="16.500" rx="1.800" fill="none" stroke="#929292" stroke-width="1.900"/><path d="M-8.600 -1.800H2V8.300" fill="none" stroke="#929292" stroke-width="1.900"/></g>
<g shape-rendering="crispEdges">
<path d="M89.5 549V905" stroke="#4f4f4f" stroke-width="1"/>
<path d="M134.5 549V905" stroke="#4f4f4f" stroke-width="1"/>
<path d="M179.5 549V905" stroke="#4f4f4f" stroke-width="1"/>
<path d="M48 550.5H588" stroke="#4f4f4f" stroke-width="1"/>
<path d="M224.5 549V905" stroke="#4f4f4f" stroke-width="1"/>
<path d="M48 595.5H588" stroke="#4f4f4f" stroke-width="1"/>
<path d="M268.5 549V905" stroke="#4f4f4f" stroke-width="1"/>
<path d="M48 640.5H588" stroke="#4f4f4f" stroke-width="1"/>
<path d="M313.5 549V905" stroke="#4f4f4f" stroke-width="1"/>
<path d="M48 685.5H588" stroke="#4f4f4f" stroke-width="1"/>
<path d="M358.5 549V905" stroke="#4f4f4f" stroke-width="1"/>
<path d="M48 729.5H588" stroke="#4f4f4f" stroke-width="1"/>
<path d="M403.5 549V905" stroke="#4f4f4f" stroke-width="1"/>
<path d="M48 774.5H588" stroke="#4f4f4f" stroke-width="1"/>
<path d="M448.5 549V905" stroke="#4f4f4f" stroke-width="1"/>
<path d="M48 819.5H588" stroke="#4f4f4f" stroke-width="1"/>
<path d="M492.5 549V905" stroke="#4f4f4f" stroke-width="1"/>
<path d="M48 864.5H588" stroke="#4f4f4f" stroke-width="1"/>
<path d="M537.5 549V905" stroke="#4f4f4f" stroke-width="1"/>
<path d="M582.5 549V905" stroke="#4f4f4f" stroke-width="1"/>
</g>
<path d="M358.5 551V729" stroke="#3aa657" stroke-width="1.1"/>
<path d="M354.0 559L358.5 551L363.0 559" fill="none" stroke="#3aa657" stroke-width="1"/>
<path d="M358 729.5H587" stroke="#2a5cb8" stroke-width="1.2"/>
<path d="M579.5 725.0L587.5 729.5L579.5 734.0" fill="none" stroke="#2a5cb8" stroke-width="1"/>
<path d="M363.5 703V745" stroke="#b4b4b4" stroke-width="1.3"/>
<path d="M269.0 623.0C272.5 623.0 283.5 622.2 290.0 623.2C296.5 624.2 302.1 626.9 308.0 629.3C313.9 631.7 319.0 633.8 325.5 637.6C332.0 641.4 339.8 646.6 347.0 652.3C354.2 658.0 363.3 666.2 368.5 671.8C373.7 677.4 375.4 681.1 378.0 686.0C380.6 690.9 382.4 696.0 384.0 701.0C385.6 706.0 386.8 711.0 387.5 716.0C388.2 721.0 388.2 724.5 388.0 731.0C387.8 737.5 387.3 747.2 386.0 755.0C384.7 762.8 382.2 772.3 380.4 778.0C378.6 783.7 377.0 785.7 375.0 789.0C373.0 792.3 372.2 794.0 368.5 798.0C364.8 802.0 355.4 810.5 352.8 813.0" fill="none" stroke="url(#sp1)" stroke-width="1.3"/>
<circle cx="260" cy="622.5" r="39" fill="none" stroke="#e21be2" stroke-width="2.6"/>
<path d="M235 666.2L203.1 689.5L213.5 691.8L204.3 703.8L211.3 708.7L220.8 695.8L226 703.6Z" fill="#f016f0"/>
<rect x="255.5" y="619.5" width="7.5" height="7.5" fill="#e8403c" stroke="#9a9a9a" stroke-width=".8"/><path d="M263 623.3h4" stroke="#eee" stroke-width="1.3"/><rect x="266" y="620" width="6.5" height="6.5" fill="#f6f6f6"/>
<path d="M296 623.3H357" stroke="#2f6fd8" stroke-width="1.5"/><path d="M372.5 623.3L355.5 619.3V627.3Z" fill="#2f6fd8"/>
<path d="M259.3 591.5V576.0" stroke="#2ecc66" stroke-width="1.4"/><path d="M259.3 561.5L255.70000000000002 578.0H262.90000000000003Z" fill="#2ecc66"/>
<path d="M300.5 554.7H327V582" fill="none" stroke="#e0393a" stroke-width="1.3"/><path d="M313.5 554.7L327 568V554.7Z" fill="#e0393a" fill-opacity=".4" stroke="#e0393a" stroke-width="1.1"/>
<path d="M352 812h2v2h-2zM379.5 777h2v2h-2zM383 700h2v2h-2zM324 635h2v2h-2z" fill="#2e2e2e"/>
<text x="546.5" y="564.5" font-size="12.5" fill="#2ecc66" font-weight="bold" text-anchor="middle">Y</text>
<path d="M547.0 568V591.5" stroke="#2ecc66" stroke-width="1.8"/>
<path d="M546.5 591.5H568.5" stroke="#2f6fd8" stroke-width="1.8"/>
<text x="578.5" y="598.0" font-size="12.5" fill="#2f6fd8" font-weight="bold" text-anchor="middle">Z</text>
<text x="546.5" y="598.0" font-size="12.5" fill="#e0393a" font-weight="bold" text-anchor="middle">X</text>
<text x="54.0" y="567.6" font-size="13.5" fill="#d4d4d4" textLength="26.0" lengthAdjust="spacingAndGlyphs">右面</text>
<text x="455.0" y="897.1" font-size="13.5" fill="#d4d4d4" textLength="127.0" lengthAdjust="spacingAndGlyphs">グリッド間隔 : 500 mm</text>
<text x="602.0" y="540.2" font-size="14" fill="#c9c9c9" textLength="27.0" lengthAdjust="spacingAndGlyphs">ビュー</text>
<text x="647.5" y="540.2" font-size="14" fill="#c9c9c9" textLength="29.5" lengthAdjust="spacingAndGlyphs">カメラ</text>
<text x="695.0" y="540.2" font-size="14" fill="#c9c9c9" textLength="27.0" lengthAdjust="spacingAndGlyphs">表示</text>
<text x="740.0" y="540.2" font-size="14" fill="#c9c9c9" textLength="51.0" lengthAdjust="spacingAndGlyphs">オプション</text>
<text x="808.5" y="540.2" font-size="14" fill="#c9c9c9" textLength="39.0" lengthAdjust="spacingAndGlyphs">フィルタ</text>
<text x="866.0" y="540.2" font-size="14" fill="#c9c9c9" textLength="34.0" lengthAdjust="spacingAndGlyphs">パネル</text>
<g transform="translate(1046 535.4)" ><g fill="#929292"><rect x="-4.500" y="-7.800" width="2.500" height="10" rx="1.250"/><rect x="-1.300" y="-9.200" width="2.500" height="11" rx="1.250"/><rect x="1.900" y="-8.300" width="2.500" height="10" rx="1.250"/><rect x="5.100" y="-5.400" width="2.400" height="8" rx="1.200"/><path d="M-4.500 -1H7.500V3C7.500 7 4.500 9.200 1.300 9.200C-2 9.200 -4 7.600 -5.500 5L-8.700 -0.600C-9.200 -1.900 -7.600 -2.700 -6.700 -1.700L-4.500 1.300Z"/></g></g>
<g transform="translate(1071.5 535.4)" ><path d="M0 -8.800L4.800 -3.500H1.500V1.200H8.500L0 8.700L-8.500 1.200H-1.500V-3.500H-4.800Z" fill="#929292"/></g>
<g transform="translate(1096.5 535.4)" ><path d="M-5.600 -5.800A8.200 8.200 0 1 0 6.800 -4.500" fill="none" stroke="#929292" stroke-width="1.800"/><circle cy="0.200" r="2.500" fill="#929292"/><circle cx="4.300" cy="-6.700" r="2.500" fill="#929292"/></g>
<g transform="translate(1121.5 535.4)" ><rect x="-8.600" y="-8.200" width="17.300" height="16.500" rx="1.800" fill="none" stroke="#929292" stroke-width="1.900"/><path d="M-8.600 -1.800H2V8.300" fill="none" stroke="#929292" stroke-width="1.900"/></g>
<g shape-rendering="crispEdges">
<path d="M640.5 549V905" stroke="#4f4f4f" stroke-width="1"/>
<path d="M593 567.5H1132" stroke="#4f4f4f" stroke-width="1"/>
<path d="M693.5 549V905" stroke="#4f4f4f" stroke-width="1"/>
<path d="M593 620.5H1132" stroke="#4f4f4f" stroke-width="1"/>
<path d="M746.5 549V905" stroke="#4f4f4f" stroke-width="1"/>
<path d="M593 674.5H1132" stroke="#4f4f4f" stroke-width="1"/>
<path d="M800.5 549V905" stroke="#4f4f4f" stroke-width="1"/>
<path d="M593 727.5H1132" stroke="#4f4f4f" stroke-width="1"/>
<path d="M853.5 549V905" stroke="#4f4f4f" stroke-width="1"/>
<path d="M593 780.5H1132" stroke="#4f4f4f" stroke-width="1"/>
<path d="M906.5 549V905" stroke="#4f4f4f" stroke-width="1"/>
<path d="M593 834.5H1132" stroke="#4f4f4f" stroke-width="1"/>
<path d="M960.5 549V905" stroke="#4f4f4f" stroke-width="1"/>
<path d="M593 887.5H1132" stroke="#4f4f4f" stroke-width="1"/>
<path d="M1013.5 549V905" stroke="#4f4f4f" stroke-width="1"/>
<path d="M1066.5 549V905" stroke="#4f4f4f" stroke-width="1"/>
<path d="M1120.5 549V905" stroke="#4f4f4f" stroke-width="1"/>
</g>
<path d="M853.5 551V780" stroke="#3aa657" stroke-width="1.1"/>
<path d="M849.0 559L853.5 551L858.0 559" fill="none" stroke="#3aa657" stroke-width="1"/>
<path d="M853 780.5H1130.5" stroke="#c8393b" stroke-width="1.1"/>
<path d="M1123 776.0L1131 780.5L1123 785.0" fill="none" stroke="#c8393b" stroke-width="1"/>
<circle cx="853" cy="773.5" r="25" fill="none" stroke="#b8b8b8" stroke-width="1.1"/>
<path d="M853.5 658V800" stroke="#a4d2fc" stroke-width="1.6"/>
<path d="M853.5 800V879" stroke="#3f97ff" stroke-width="1.6"/>
<path d="M852.5 669h2v2h-2zM852.5 836h2v3h-2zM852.5 877h2v2h-2z" fill="#2e2e2e"/>
<path d="M853.3 652V578.0" stroke="#2ecc66" stroke-width="1.4"/><path d="M853.3 563.5L849.6999999999999 580.0H856.9Z" fill="#2ecc66"/>
<rect x="849.5" y="650.5" width="7.5" height="7.5" fill="#2f6fd8"/>
<path d="M883.5 654H951.5" stroke="#e0393a" stroke-width="1.4"/><path d="M966.5 654L949.5 650V658Z" fill="#e0393a"/>
<path d="M893.5 585.8H921V612.5" fill="none" stroke="#2f6fd8" stroke-width="1.4"/><path d="M907.5 585.8L921 599.5V585.8Z" fill="#2f6fd8" fill-opacity=".4" stroke="#2f6fd8" stroke-width="1.2"/>
<text x="1090.5" y="564.5" font-size="12.5" fill="#2ecc66" font-weight="bold" text-anchor="middle">Y</text>
<path d="M1091.0 568V591.5" stroke="#2ecc66" stroke-width="1.8"/>
<path d="M1090.5 591.5H1112.5" stroke="#e0393a" stroke-width="1.8"/>
<text x="1122.5" y="598.0" font-size="12.5" fill="#e0393a" font-weight="bold" text-anchor="middle">X</text>
<text x="1090.5" y="598.0" font-size="12.5" fill="#2f6fd8" font-weight="bold" text-anchor="middle">Z</text>
<text x="599.0" y="567.6" font-size="13.5" fill="#d4d4d4" textLength="26.0" lengthAdjust="spacingAndGlyphs">前面</text>
<text x="999.0" y="897.1" font-size="13.5" fill="#d4d4d4" textLength="127.5" lengthAdjust="spacingAndGlyphs">グリッド間隔 : 500 mm</text>
</svg>
</section>
<section id="material-manager">
<div style="left:1134.5px;top:132px;width:179px;height:775.5px;background:#1c1c1c;"></div>
<div style="left:1136.5px;top:133.5px;width:176px;height:773px;background:#2c2c2c;"></div>
<div style="left:1138px;top:199px;width:174px;height:1px;background:#1f1f1f;"></div>
<div style="left:1148px;top:164px;width:104px;height:35px;background:#3c3c3c;border-radius:4px;"></div>
<div style="left:1182.5px;top:165px;width:1px;height:33px;background:#333;"></div>
<div style="left:1217px;top:165px;width:1px;height:33px;background:#333;"></div>
<div style="left:1276px;top:164px;width:35px;height:35px;background:#383838;border-radius:4px;"></div>
<div style="left:1139px;top:868.5px;width:171px;height:1px;background:#3a3a3a;"></div>
<div style="left:1146px;top:876.5px;width:68px;height:23px;background:#3a3a3a;border-radius:3px;"></div>
<div style="left:1146px;top:878px;width:21px;height:21.5px;background:#5558a0;border-radius:4px 0 0 4px;"></div>
<div style="left:1146px;top:876px;width:21px;height:1.3px;background:#6a6ec4;"></div>
<div style="left:1190px;top:877.5px;width:1px;height:21px;background:#333;"></div>
<div style="left:1232px;top:885.5px;width:71px;height:4.5px;background:#1c1c1c;border-radius:2px;"></div>
<div style="left:1229px;top:880px;width:5.2px;height:15px;background:#d0d0d0;border-radius:2.6px;"></div>
<svg class="ov" width="1921" height="1015" viewBox="0 0 1921 1015">
<path d="M1145.500 143.200h18M1145.500 148.400h18M1145.500 153.600h18" stroke="#9a9a9a" stroke-width="2.500"/>
<text x="1176.0" y="152.5" font-size="14" fill="#c9c9c9" textLength="26.5" lengthAdjust="spacingAndGlyphs">作成</text>
<text x="1220.5" y="152.5" font-size="14" fill="#c9c9c9" textLength="26.5" lengthAdjust="spacingAndGlyphs">編集</text>
<path d="M1266 143l6 4.8-6 4.8" stroke="#c4c4c4" stroke-width="1.5" fill="none"/>
<g transform="translate(1139.5 172)"><rect x="0" y="0" width="6" height="22" fill="url(#dp)"/></g>
<path d="M1156 181.600H1174M1165 172.600V190.600" stroke="#c8c8c8" stroke-width="2.2"/>
<path d="M1180.5 191.5V197.5H1174.5Z" fill="#a0a0a0"/>
<path d="M1192.2 189.800L1208.2 173.600M1197.400 173.600H1208.200V184" fill="none" stroke="#606060" stroke-width="1.500"/>
<g transform="translate(1234.5 181.500) rotate(45)"><path d="M-2.800 -6.500H2.800V8L0 11.500L-2.800 8Z" fill="none" stroke="#c4c4c4" stroke-width="1.700" stroke-linejoin="round"/><rect x="-4.600" y="-8" width="9.200" height="2" fill="#c4c4c4"/><rect x="-3" y="-14" width="6" height="6.500" rx="1" fill="#c4c4c4"/></g>
<g fill="none" stroke="#585858" stroke-width="1.600"><path d="M1284 173.800H1302.800M1289.500 173.500V171.600H1297.500V173.500"/><path d="M1286.200 174V189.500a1.800 1.800 0 0 0 1.800 1.800H1299a1.800 1.800 0 0 0 1.800-1.800V174"/><path d="M1291 178V187.500M1296 178V187.500" stroke-width="2"/></g>
<g stroke="#e0e0e0" stroke-width="1.700"><path d="M1154.300 884H1165M1154.300 888H1165M1154.300 892H1165"/></g><g fill="#e0e0e0"><rect x="1150" y="883.100" width="2.200" height="1.800"/><rect x="1150" y="887.100" width="2.200" height="1.800"/><rect x="1150" y="891.100" width="2.200" height="1.800"/></g>
<g fill="#c4c4c4"><rect x="1173" y="880.500" width="6.300" height="6.300" rx="1.300"/><rect x="1181" y="880.500" width="6.300" height="6.300" rx="1.300"/><rect x="1173" y="888.500" width="6.300" height="6.300" rx="1.300"/><rect x="1181" y="888.500" width="6.300" height="6.300" rx="1.300"/></g>
<rect x="1197.500" y="880" width="13" height="13" rx="1.500" fill="#c4c4c4"/><path d="M1195 882.500V895H1208" fill="none" stroke="#c4c4c4" stroke-width="1.200"/>
</svg>
</section>
<section id="right-palette">
<div style="left:1314px;top:132px;width:45px;height:44px;background:#3c3c3c;border-radius:4px;"></div>
<div style="left:1314px;top:189px;width:45px;height:134.01px;background:#3c3c3c;border-radius:4px;"></div>
<div style="left:1315px;top:233.17000000000002px;width:43px;height:1px;background:#343434;"></div>
<div style="left:1315px;top:277.84000000000003px;width:43px;height:1px;background:#343434;"></div>
<div style="left:1314px;top:336px;width:45px;height:89.0px;background:#3c3c3c;border-radius:4px;"></div>
<div style="left:1315px;top:380.0px;width:43px;height:1px;background:#343434;"></div>
<div style="left:1314px;top:432px;width:45px;height:89.0px;background:#3c3c3c;border-radius:4px;"></div>
<div style="left:1315px;top:476.0px;width:43px;height:1px;background:#343434;"></div>
<div style="left:1314px;top:527px;width:45px;height:44px;background:#3c3c3c;border-radius:4px;"></div>
<div style="left:1314px;top:584px;width:45px;height:178.68px;background:#3c3c3c;border-radius:4px;"></div>
<div style="left:1315px;top:628.17px;width:43px;height:1px;background:#343434;"></div>
<div style="left:1315px;top:672.84px;width:43px;height:1px;background:#343434;"></div>
<div style="left:1315px;top:717.51px;width:43px;height:1px;background:#343434;"></div>
<div style="left:1314px;top:789px;width:45px;height:45px;background:#3c3c3c;border-radius:4px;"></div>
<svg class="ov" width="1921" height="1015" viewBox="0 0 1921 1015">
<g fill="none" stroke="#c8ccf8" stroke-width="2"><path d="M1327.6 141.5V163H1350"/><path d="M1322.8 146L1327.6 141.2L1332.4 146M1345.5 158.2L1350.3 163L1345.5 167.8"/></g><circle cx="1343" cy="148" r="7.8" fill="#c8ccf8"/>
<rect x="1325.5" y="200" width="23" height="23" fill="none" stroke="#86d8fb" stroke-width="2.3"/>
<path d="M1357.5 226.5V232.5H1351.5Z" fill="#9a9a9a"/>
<path d="M1336.5 241.5L1348.9 248.7L1348.9 262.9L1336.5 270.1L1324.1 263.0L1324.1 248.7Z" fill="#86d8fb"/><path d="M1336.5 255.8V270M1336.5 255.8L1324.1 248.7M1336.5 255.8L1348.9 248.7" stroke="#3c3c3c" stroke-width="1.4" fill="none"/>
<path d="M1357.5 271V277H1351.5Z" fill="#9a9a9a"/>
<path d="M1325 293.5V288.5H1348V293.5M1336.5 288.5V314M1330 314H1343" fill="none" stroke="#86d8fb" stroke-width="2.2"/>
<path d="M1357.5 316V322H1351.5Z" fill="#9a9a9a"/>
<path d="M1336.4 346.7L1348.0 351.7L1348.0 366.5L1336.4 371.4L1324.8 366.5L1324.8 351.7Z" fill="none" stroke="#e8e8e8" stroke-width="1.1" stroke-dasharray="4 2.5"/><circle cx="1336.4" cy="359" r="7.6" fill="#5bd77c"/>
<rect x="1334.2" y="344.5" width="4.4" height="4.4" fill="#3c3c3c" stroke="#e8e8e8" stroke-width="1.1"/>
<rect x="1345.8" y="349.5" width="4.4" height="4.4" fill="#3c3c3c" stroke="#e8e8e8" stroke-width="1.1"/>
<rect x="1345.8" y="364.3" width="4.4" height="4.4" fill="#3c3c3c" stroke="#e8e8e8" stroke-width="1.1"/>
<rect x="1334.2" y="369.2" width="4.4" height="4.4" fill="#3c3c3c" stroke="#e8e8e8" stroke-width="1.1"/>
<rect x="1322.6" y="364.3" width="4.4" height="4.4" fill="#3c3c3c" stroke="#e8e8e8" stroke-width="1.1"/>
<rect x="1322.6" y="349.5" width="4.4" height="4.4" fill="#3c3c3c" stroke="#e8e8e8" stroke-width="1.1"/>
<path d="M1357.5 373.5V379.5H1351.5Z" fill="#9a9a9a"/>
<path d="M1336.4 389.3L1349.0 396.6L1349.0 411.1L1336.4 418.3L1323.8 411.1L1323.8 396.6Z" fill="#5bd77c"/><path d="M1336.4 404.8V419.3M1336.4 404.8L1322.8 396.6M1336.4 404.8L1350.0 396.6" stroke="#3c3c3c" stroke-width="2.2" fill="none"/>
<path d="M1357.5 418V424H1351.5Z" fill="#9a9a9a"/>
<path d="M1324 444.5L1331 440.5C1342 441 1348 448 1349.5 459L1340 467.5L1329.5 463.5C1329.5 458 1327 455 1324 453.5Z" fill="none" stroke="#9a9cff" stroke-width="1.9" stroke-linejoin="round"/><path d="M1328.5 448C1335 449.5 1339.5 455 1340 466" fill="none" stroke="#9a9cff" stroke-width="1.6"/>
<path d="M1357.5 469.5V475.5H1351.5Z" fill="#9a9a9a"/>
<g fill="none" stroke="#9a9cff" stroke-width="2"><path d="M1325.3 486.5V510.3H1350.5"/><path d="M1321 490.5L1325.3 486L1329.6 490.5M1346.5 506L1351 510.3L1346.5 514.6"/></g>
<path d="M1342.8 485.2L1349.2 488.9L1349.2 496.3L1342.8 500.0L1336.4 496.3L1336.4 488.9ZM1342.8 492.6V500M1342.8 492.6L1336.4 488.9M1342.8 492.6L1349.2 488.9" fill="none" stroke="#9a9cff" stroke-width="1.3"/>
<path d="M1357.5 514V520H1351.5Z" fill="#9a9a9a"/>
<g fill="none" stroke="#f4a8f8" stroke-width="2.1" stroke-linejoin="miter"><path d="M1325.2 543.3L1335.3 548.6V561.5L1325.2 555.6Z"/><path d="M1337.6 536.2L1347.8 541.5V554.7L1337.6 549.2Z"/><path d="M1330.3 552.6L1342.8 545.4" stroke-width="1.5"/></g>
<path d="M1357.5 564V570H1351.5Z" fill="#9a9a9a"/>
<g fill="none" stroke="#c8ccf8" stroke-width="1.7"><circle cx="1335.6" cy="607" r="13.3"/><ellipse cx="1335.6" cy="607" rx="6" ry="13.3"/><path d="M1335.6 593.7V620.3M1322.3 607H1349M1324.5 600H1346.7M1324.5 614H1346.7"/></g>
<rect x="1339.3" y="609.4" width="12.5" height="11" rx="2" fill="#0a0a0a"/>
<text x="1345.6" y="618.1" font-size="8.5" fill="#fff" font-weight="bold" text-anchor="middle">ST</text>
<path d="M1357.5 621.5V627.5H1351.5Z" fill="#9a9a9a"/>
<path d="M1322.5 645.5H1350.7V662H1322.5Z" fill="none" stroke="#c8ccf8" stroke-width="2"/><path d="M1321.5 639.3H1351.7V646H1321.5Z" fill="#c8ccf8"/>
<path d="M1326.0 639L1328.6 644.2H1331.4L1328.8 639Z" fill="#3c3c3c"/>
<path d="M1332.8 639L1335.4 644.2H1338.2L1335.6 639Z" fill="#3c3c3c"/>
<path d="M1339.6 639L1342.2 644.2H1345.0L1342.4 639Z" fill="#3c3c3c"/>
<path d="M1346.4 639L1349.0 644.2H1351.8L1349.2 639Z" fill="#3c3c3c"/>
<g fill="none" stroke="#c8ccf8" stroke-width="2"><rect x="1322.5" y="694" width="17" height="12.5" rx="1"/><path d="M1324.5 694V686.3H1335.5V694"/></g><path d="M1341 700L1350 694.5V703Z" fill="#c8ccf8"/>
<rect x="1339.3" y="699.7" width="12.5" height="11" rx="2" fill="#0a0a0a"/>
<text x="1345.6" y="708.4" font-size="8.5" fill="#fff" font-weight="bold" text-anchor="middle">ST</text>
<path d="M1357.5 711V717H1351.5Z" fill="#9a9a9a"/>
<g fill="none" stroke="#c8ccf8" stroke-width="1.9"><path d="M1331 748.5a8 8 0 1 1 9.500 0"/><path d="M1331 750.5H1338M1332.500 753.500H1338" stroke-width="1.600"/><path d="M1335.600 727.500V731M1326 731.500L1328.500 734M1345.500 731.500L1343 734M1321.500 741.500H1325M1346.500 741.500H1350" stroke-linecap="round"/></g>
<rect x="1339.3" y="746.3" width="12.5" height="11" rx="2" fill="#0a0a0a"/>
<text x="1345.6" y="755.0" font-size="8.5" fill="#fff" font-weight="bold" text-anchor="middle">ST</text>
<path d="M1357.5 755.5V761.5H1351.5Z" fill="#9a9a9a"/>
<path d="M1346.700 808V818.5L1335.5 825.0L1324.2 818.5L1324.2 805.5L1335.5 799.0L1341 802" fill="none" stroke="#666" stroke-width="1.500"/><path d="M1331.500 818L1333 812.500L1345.500 800L1349.500 804L1337 816.500Z" fill="#666"/>
<path d="M1357.5 827V833H1351.5Z" fill="#6a6a6a"/>
</svg>
</section>
<section id="object-manager">
<div style="left:1360px;top:95px;width:561px;height:460px;background:#1c1c1c;"></div>
<div style="left:1362px;top:97px;width:559px;height:27.5px;background:#1e1e1e;"></div>
<div style="left:1362px;top:97px;width:87px;height:27.5px;background:#2d2d2d;"></div>
<div style="left:1362px;top:124.5px;width:559px;height:29px;background:#2d2d2d;"></div>
<div style="left:1362px;top:153.5px;width:559px;height:400px;background:#2d2d2d;"></div>
<div style="left:1362px;top:154.3px;width:559px;height:25.2px;background:#212121;"></div>
<div style="left:1362px;top:204.7px;width:559px;height:25.6px;background:#1f1f1f;"></div>
<div style="left:1539px;top:153.5px;width:1px;height:400px;background:#222;"></div>
<svg class="ov" width="1921" height="1015" viewBox="0 0 1921 1015">
<text x="1375.5" y="115.5" font-size="14" fill="#ececec" textLength="59.5" lengthAdjust="spacingAndGlyphs">オブジェクト</text>
<text x="1465.0" y="115.5" font-size="14" fill="#a8a8a8" textLength="30.5" lengthAdjust="spacingAndGlyphs">テイク</text>
<path d="M1368.800 134.300h17.500M1368.800 139.500h17.500M1368.800 144.700h17.500" stroke="#e8e8e8" stroke-width="2.600"/>
<text x="1398.5" y="143.5" font-size="14" fill="#c9c9c9" textLength="39.0" lengthAdjust="spacingAndGlyphs">ファイル</text>
<text x="1457.0" y="143.5" font-size="14" fill="#c9c9c9" textLength="26.0" lengthAdjust="spacingAndGlyphs">編集</text>
<text x="1502.0" y="143.5" font-size="14" fill="#c9c9c9" textLength="27.0" lengthAdjust="spacingAndGlyphs">表示</text>
<text x="1546.0" y="143.5" font-size="14" fill="#c9c9c9" textLength="60.0" lengthAdjust="spacingAndGlyphs">オブジェクト</text>
<text x="1624.0" y="143.5" font-size="14" fill="#c9c9c9" textLength="20.0" lengthAdjust="spacingAndGlyphs">タグ</text>
<text x="1662.0" y="143.5" font-size="14" fill="#c9c9c9" textLength="60.0" lengthAdjust="spacingAndGlyphs">ブックマーク</text>
<g transform="translate(1830 138.5)" ><circle cx="-2" cy="-2" r="5.4" fill="none" stroke="#b8b8b8" stroke-width="1.8"/><path d="M2 2l6 6" stroke="#b8b8b8" stroke-width="2.2"/></g>
<g transform="translate(1856 138.5)" ><path d="M-7.5 0L0-7.5L7.5 0M-5.5-1.5V7.5H-1.8V2H1.8V7.5H5.5V-1.5" fill="none" stroke="#b8b8b8" stroke-width="1.8" stroke-linejoin="round"/></g>
<g transform="translate(1881 138.5)" ><path d="M-8.5-5.5h17M-5.5-0.5h11M-2.5 4.5h5" stroke="#b8b8b8" stroke-width="2"/></g>
<g transform="translate(1906 138.5)" ><path d="M-1-7H-8V8H7V1" fill="none" stroke="#b8b8b8" stroke-width="1.8"/><path d="M0-8.5H8.5V0M8-8L-0.5 0.5" fill="none" stroke="#b8b8b8" stroke-width="1.8"/></g>
<path d="M1371.800 154.500V162M1378 168H1385M1386.600 180V218.600H1398.500M1386.600 193.700H1398.500" fill="none" stroke="#6a6a6a" stroke-width="1"/>
<rect x="1366.500" y="162.500" width="11" height="11" fill="none" stroke="#8a8a8a" stroke-width="1.200"/><path d="M1369 168h6" stroke="#b0b0b0" stroke-width="1.500"/>
<path d="M1389.500 172c2.500-1 3.500-3.500 3.500-6s2-4.500 4.500-3.500" fill="none" stroke="#4fd86e" stroke-width="5.200" stroke-linecap="round"/><path d="M1390.500 171c2-1.500 2.500-3.500 2.800-5.500s1.500-3 3.200-2.600" fill="none" stroke="#d8ffe0" stroke-width="1" stroke-linecap="round"/><ellipse cx="1388" cy="172.300" rx="2.600" ry="3.200" transform="rotate(25 1388 172.300)" fill="#222" stroke="#f0f0f0" stroke-width="1.200"/>
<text x="1406.8" y="173.0" font-size="14" fill="#e58a3c" textLength="39.4" lengthAdjust="spacingAndGlyphs">スイープ</text>
<circle cx="1407" cy="193" r="7.700" fill="none" stroke="#8fd8ff" stroke-width="1.500"/>
<text x="1422.0" y="198.3" font-size="14" fill="#c9c9c9" textLength="26.5" lengthAdjust="spacingAndGlyphs">円形</text>
<path d="M1406.800 211.800C1402 212.500 1398.500 214.500 1400.500 216.500C1403 218.800 1412 219 1414 221.500C1415 223.500 1411 224.700 1406.800 224.700" fill="none" stroke="#8fd8ff" stroke-width="1.400"/><circle cx="1406.800" cy="211.800" r="1.800" fill="#fff"/><circle cx="1406.800" cy="224.700" r="1.800" fill="#fff"/>
<text x="1422.0" y="223.4" font-size="14" fill="#ffb62e" textLength="49.5" lengthAdjust="spacingAndGlyphs">スプライン</text>
<rect x="1485" y="161.0" width="13" height="13" rx="2.500" fill="#585858"/><path d="M1488.500 170.5l6-6" stroke="#222" stroke-width="2"/>
<circle cx="1509" cy="162.5" r="3.800" fill="#545454"/><circle cx="1509" cy="173.0" r="3.800" fill="#545454"/>
<rect x="1485" y="186.5" width="13" height="13" rx="2.500" fill="#585858"/><path d="M1488.500 196l6-6" stroke="#222" stroke-width="2"/>
<circle cx="1509" cy="188" r="3.800" fill="#545454"/><circle cx="1509" cy="198.5" r="3.800" fill="#545454"/>
<rect x="1485" y="211.8" width="13" height="13" rx="2.500" fill="#585858"/><path d="M1488.500 221.3l6-6" stroke="#222" stroke-width="2"/>
<circle cx="1509" cy="213.3" r="3.800" fill="#545454"/><circle cx="1509" cy="223.8" r="3.800" fill="#545454"/>
<path d="M1520.500 161.700l11 10.800M1531.500 161.700l-11 10.800" stroke="#e8685c" stroke-width="2.300"/>
<path d="M1518.500 192.8l5 4.800l8.800-9.800" fill="none" stroke="#4ee07a" stroke-width="2.300"/>
<path d="M1518.500 217.8l5 4.800l8.800-9.800" fill="none" stroke="#4ee07a" stroke-width="2.300"/>
<path d="M1545.500 174V159.300H1560" fill="none" stroke="#9093ff" stroke-width="1.500"/><path d="M1548.500 162.300H1557.500C1557 167 1553.500 170 1548.500 170.500Z" fill="#9093ff"/>
</svg>
</section>
<section id="attribute-manager">
<div style="left:1360px;top:555px;width:561px;height:460px;background:#1c1c1c;"></div>
<div style="left:1362px;top:555.5px;width:559px;height:28px;background:#1e1e1e;"></div>
<div style="left:1362px;top:555.5px;width:56px;height:28px;background:#2d2d2d;"></div>
<div style="left:1362px;top:583.5px;width:559px;height:427px;background:#2d2d2d;"></div>
<div style="left:1766.5px;top:618px;width:144px;height:23.7px;background:#3c3c3c;border-radius:12px;"></div>
<div style="left:1885px;top:619px;width:1px;height:21.7px;background:#2a2a2a;"></div>
<div style="left:1371px;top:649.3px;width:74px;height:23.3px;background:#3c3c3c;border-radius:6px;"></div>
<div style="left:1450px;top:649.3px;width:36px;height:23.3px;background:#5558a0;border-radius:6px;"></div>
<div style="left:1491px;top:649.3px;width:79.5px;height:23.3px;background:#3c3c3c;border-radius:6px;"></div>
<div style="left:1369px;top:707px;width:523px;height:1.2px;background:#1e1e1e;"></div>
<div style="left:1486px;top:742.3px;width:406px;height:23.5px;background:#3c3c3c;border-radius:5px;"></div>
<div style="left:1486px;top:767.6px;width:406px;height:23.3px;background:#3c3c3c;border-radius:5px;"></div>
<div style="left:1486px;top:844px;width:365px;height:22px;background:#272727;border-radius:5px;"></div>
<div style="left:1486px;top:872px;width:92.5px;height:22px;background:#1e1e1e;border-radius:4px;"></div>
<div style="left:1584.5px;top:878.8px;width:307.5px;height:5.5px;background:#1c1c1c;border-radius:2.75px;"></div>
<div style="left:1584.5px;top:878.8px;width:153px;height:5.5px;background:#5a5eaa;border-radius:2.75px;"></div>
<div style="left:1734.5px;top:874.5px;width:5.8px;height:14.5px;background:#cdcdcd;border-radius:2.9px;"></div>
<div style="left:1486px;top:899.5px;width:92.5px;height:22px;background:#1e1e1e;border-radius:4px;"></div>
<div style="left:1584.5px;top:905.8px;width:307.5px;height:5.5px;background:#1c1c1c;border-radius:2.75px;"></div>
<div style="left:1584.5px;top:905.8px;width:153px;height:5.5px;background:#5a5eaa;border-radius:2.75px;"></div>
<div style="left:1734.5px;top:901.5px;width:5.8px;height:14.5px;background:#cdcdcd;border-radius:2.9px;"></div>
<div style="left:1486px;top:927px;width:92.5px;height:22px;background:#1e1e1e;border-radius:4px;"></div>
<div style="left:1584.5px;top:933.8px;width:307.5px;height:5.5px;background:#1c1c1c;border-radius:2.75px;"></div>
<div style="left:1584.5px;top:933.8px;width:153px;height:5.5px;background:#5a5eaa;border-radius:2.75px;"></div>
<div style="left:1734.5px;top:929.5px;width:5.8px;height:14.5px;background:#cdcdcd;border-radius:2.9px;"></div>
<div style="left:1369px;top:963px;width:523px;height:1.2px;background:#1e1e1e;"></div>
<div style="left:1900px;top:678px;width:5.6px;height:303px;background:#4c4c4c;border-radius:2.8px;"></div>
<svg class="ov" width="1921" height="1015" viewBox="0 0 1921 1015">
<text x="1375.0" y="574.5" font-size="14" fill="#ececec" textLength="27.0" lengthAdjust="spacingAndGlyphs">属性</text>
<path d="M1368.800 592.500h17.500M1368.800 597.800h17.500M1368.800 603.100h17.500" stroke="#a8a8a8" stroke-width="2.500"/>
<text x="1398.0" y="602.0" font-size="14" fill="#c9c9c9" textLength="29.0" lengthAdjust="spacingAndGlyphs">モード</text>
<text x="1446.5" y="602.0" font-size="14" fill="#c9c9c9" textLength="26.5" lengthAdjust="spacingAndGlyphs">編集</text>
<text x="1491.0" y="602.0" font-size="14" fill="#c9c9c9" textLength="71.0" lengthAdjust="spacingAndGlyphs">ユーザーデータ</text>
<g transform="translate(1730 598.3)" ><path d="M8 0H-7M-1-6.5L-7.5 0L-1 6.5" fill="none" stroke="#b8b8b8" stroke-width="2"/></g>
<g transform="translate(1756 598.3)" ><path d="M-8 0H7M1-6.5L7.5 0L1 6.5" fill="none" stroke="#4a4a4a" stroke-width="2"/></g>
<g transform="translate(1781 598.3)" ><path d="M0 8V-7M-6.5-1L0-7.5L6.5-1" fill="none" stroke="#4a4a4a" stroke-width="2"/></g>
<g transform="translate(1806 598.3)" ><circle cx="-2" cy="-2" r="5.4" fill="none" stroke="#b8b8b8" stroke-width="1.8"/><path d="M2 2l6 6" stroke="#b8b8b8" stroke-width="2.2"/></g>
<g transform="translate(1831 598.3)" ><path d="M-8.5-5.5h17M-5.5-0.5h11M-2.5 4.5h5" stroke="#b8b8b8" stroke-width="2"/></g>
<g transform="translate(1856 598.3)" ><rect x="-6" y="-1" width="12" height="9.5" rx="1.5" fill="none" stroke="#b8b8b8" stroke-width="1.8"/><path d="M-3.5-1V-4.5a3.5 3.5 0 0 1 7 0V-1" fill="none" stroke="#b8b8b8" stroke-width="1.8"/><circle cy="3.8" r="1.4" fill="#b8b8b8"/></g>
<g transform="translate(1881 598.3)" ><circle r="9.300" fill="none" stroke="#b8b8b8" stroke-width="1.800"/><circle r="3.300" fill="none" stroke="#b8b8b8" stroke-width="1.800"/></g>
<g transform="translate(1906 598.3)" ><path d="M-1-7H-8V8H7V1" fill="none" stroke="#b8b8b8" stroke-width="1.8"/><path d="M0-8.5H8.5V0M8-8L-0.5 0.5" fill="none" stroke="#b8b8b8" stroke-width="1.8"/></g>
<rect x="1373.300" y="620.800" width="18.600" height="18" rx="2.500" fill="none" stroke="#f0a030" stroke-width="1.700" stroke-dasharray="3.200 2.100"/><path d="M1379.500 624.300V635L1386.700 631Z" fill="#c4c4c4"/>
<text x="1402.0" y="634.5" font-size="14" fill="#c9c9c9" textLength="67.5" lengthAdjust="spacingAndGlyphs">長方形選択</text>
<text x="1775.0" y="634.8" font-size="14" fill="#e0e0e0" textLength="50.5" lengthAdjust="spacingAndGlyphs">デフォルト</text>
<path d="M1892.5 627.5h10l-5 5.5z" fill="#d0d0d0"/>
<text x="1382.0" y="666.0" font-size="14" fill="#d4d4d4" textLength="51.0" lengthAdjust="spacingAndGlyphs">オプション</text>
<text x="1461.0" y="666.0" font-size="14" fill="#ffffff" textLength="14.0" lengthAdjust="spacingAndGlyphs" font-weight="bold">軸</text>
<text x="1502.0" y="666.0" font-size="14" fill="#d4d4d4" textLength="57.0" lengthAdjust="spacingAndGlyphs">ソフト選択</text>
<text x="1371.0" y="697.2" font-size="14.5" fill="#ececec" textLength="15.0" lengthAdjust="spacingAndGlyphs" font-weight="bold">軸</text>
<path d="M1382 720.5l4.5 4.5l4.5-4.5" fill="none" stroke="#c8c8c8" stroke-width="1.5"/>
<text x="1399.0" y="728.5" font-size="14" fill="#ececec" textLength="61.0" lengthAdjust="spacingAndGlyphs" font-weight="bold">モデリング軸</text>
<text x="1409.0" y="759.0" font-size="14" fill="#c9c9c9" textLength="27.5" lengthAdjust="spacingAndGlyphs">位置</text>
<text x="1409.0" y="783.5" font-size="14" fill="#c9c9c9" textLength="24.0" lengthAdjust="spacingAndGlyphs">向き</text>
<text x="1409.0" y="808.5" font-size="14" fill="#c9c9c9" textLength="65.0" lengthAdjust="spacingAndGlyphs">変更を維持</text>
<text x="1409.0" y="834.0" font-size="14" fill="#5e5e5e" textLength="71.0" lengthAdjust="spacingAndGlyphs">法線に沿って</text>
<text x="1409.0" y="859.5" font-size="14" fill="#5e5e5e" textLength="60.0" lengthAdjust="spacingAndGlyphs">オブジェクト</text>
<text x="1409.0" y="888.0" font-size="14" fill="#c9c9c9">X</text>
<text x="1409.0" y="915.0" font-size="14" fill="#c9c9c9">Y</text>
<text x="1409.0" y="943.0" font-size="14" fill="#c9c9c9">Z</text>
<text x="1495.0" y="759.0" font-size="14" fill="#e0e0e0" textLength="28.0" lengthAdjust="spacingAndGlyphs">選択</text>
<text x="1495.0" y="784.0" font-size="14" fill="#e0e0e0" textLength="41.0" lengthAdjust="spacingAndGlyphs">回転軸</text>
<path d="M1874.5 752h9l-4.5 5z M1874.5 777.5h9l-4.5 5z" fill="#d0d0d0"/>
<rect x="1488" y="797.500" width="13.500" height="13.500" rx="2.500" fill="none" stroke="#6e6e6e" stroke-width="2.200"/>
<rect x="1488" y="822.500" width="13.500" height="13.500" rx="2.500" fill="none" stroke="#454545" stroke-width="2.200"/>
<path d="M1855.5 853h8l-4 4.5z" fill="#555"/>
<path d="M1876 861l1-3.5l7.5-7.5l2.5 2.5l-7.5 7.5zM1883.5 849l3.5-1.5l1.5 1.5l-1.5 3.5" fill="none" stroke="#4e4e4e" stroke-width="1.4"/>
<text x="1532.5" y="888.0" font-size="14" fill="#e0e0e0" text-anchor="middle">0 %</text>
<text x="1532.5" y="915.0" font-size="14" fill="#e0e0e0" text-anchor="middle">0 %</text>
<text x="1532.5" y="943.0" font-size="14" fill="#e0e0e0" text-anchor="middle">0 %</text>
<path d="M1382 978l4.5 4.5l4.5-4.5" fill="none" stroke="#c8c8c8" stroke-width="1.5"/>
<text x="1399.0" y="986.0" font-size="14" fill="#ececec" textLength="68.5" lengthAdjust="spacingAndGlyphs" font-weight="bold">オブジェクト軸</text>
<clipPath id="cut"><rect x="1362" y="990" width="550" height="18"/></clipPath>
<g clip-path="url(#cut)">
<text x="1409.0" y="1013.5" font-size="14" fill="#c9c9c9" textLength="167.0" lengthAdjust="spacingAndGlyphs">オブジェクトごとにトランスフォーム</text>
<rect x="1584" y="1002" width="13.500" height="13.500" rx="2.500" fill="none" stroke="#6e6e6e" stroke-width="2.200"/></g>
</svg>
</section>
<section id="timeline">
<div style="left:56.5px;top:920px;width:34px;height:34px;background:#5558a0;border-radius:4px;"></div>
<div style="left:289px;top:920px;width:244px;height:34px;background:#383838;border-radius:4px;"></div>
<div style="left:546.5px;top:920px;width:104.5px;height:34px;background:#383838;border-radius:4px;"></div>
<div style="left:546.5px;top:920px;width:69px;height:34px;background:#5558a0;border-radius:4px 0 0 4px;"></div>
<div style="left:581px;top:921px;width:1px;height:32px;background:#44478a;"></div>
<div style="left:664.5px;top:925px;width:93px;height:22px;background:#1e1e1e;border-radius:4px;"></div>
<div style="left:771px;top:920px;width:105px;height:34px;background:#383838;border-radius:4px;"></div>
<div style="left:805.5px;top:921px;width:1px;height:32px;background:#303030;"></div>
<div style="left:840.5px;top:921px;width:1px;height:32px;background:#303030;"></div>
<div style="left:901px;top:920px;width:174.5px;height:34px;background:#383838;border-radius:4px;"></div>
<div style="left:1041px;top:920px;width:34.5px;height:34px;background:#5558a0;border-radius:0 4px 4px 0;"></div>
<div style="left:935.5px;top:921px;width:1px;height:32px;background:#303030;"></div>
<div style="left:970.5px;top:921px;width:1px;height:32px;background:#303030;"></div>
<div style="left:1005.5px;top:921px;width:1px;height:32px;background:#303030;"></div>
<div style="left:1274px;top:920px;width:32.5px;height:34px;background:#5558a0;border-radius:3px;"></div>
<div style="left:59px;top:976.5px;width:1253px;height:1px;background:#383838;"></div>
<div style="left:68px;top:956px;width:12px;height:21px;background:#6d71c4;"></div>
<div style="left:57px;top:988px;width:93.5px;height:22px;background:#1e1e1e;border-radius:5px;"></div>
<div style="left:159.5px;top:988px;width:1050.5px;height:21.5px;background:#3c3c3c;border-radius:5px;"></div>
<div style="left:1218.5px;top:988px;width:93px;height:22px;background:#1e1e1e;border-radius:5px;"></div>
<svg class="ov" width="1921" height="1015" viewBox="0 0 1921 1015">
<g transform="translate(51.5 910.5)"><rect x="0" y="0" width="1258" height="6" fill="url(#dp)"/></g>
<g transform="translate(47.5 925.5)"><rect x="0" y="0" width="6" height="26" fill="url(#dp)"/></g>
<g transform="translate(47.5 960.5)"><rect x="0" y="0" width="6" height="46" fill="url(#dp)"/></g>
<text x="711.0" y="941.5" font-size="14" fill="#e0e0e0" text-anchor="middle">0 F</text>
<g shape-rendering="crispEdges">
<path d="M61.5 980V983.5" stroke="#a0a0a0" stroke-width="1"/>
<path d="M74.5 979.5V984.5" stroke="#b0b0b0" stroke-width="1"/>
<path d="M88.5 980V983.5" stroke="#a0a0a0" stroke-width="1"/>
<path d="M102.5 980V983.5" stroke="#a0a0a0" stroke-width="1"/>
<path d="M115.5 980V983.5" stroke="#a0a0a0" stroke-width="1"/>
<path d="M129.5 980V983.5" stroke="#a0a0a0" stroke-width="1"/>
<path d="M142.5 979.5V984.5" stroke="#b0b0b0" stroke-width="1"/>
<path d="M156.5 980V983.5" stroke="#a0a0a0" stroke-width="1"/>
<path d="M169.5 980V983.5" stroke="#a0a0a0" stroke-width="1"/>
<path d="M183.5 980V983.5" stroke="#a0a0a0" stroke-width="1"/>
<path d="M196.5 980V983.5" stroke="#a0a0a0" stroke-width="1"/>
<path d="M210.5 979.5V984.5" stroke="#b0b0b0" stroke-width="1"/>
<path d="M224.5 980V983.5" stroke="#a0a0a0" stroke-width="1"/>
<path d="M237.5 980V983.5" stroke="#a0a0a0" stroke-width="1"/>
<path d="M251.5 980V983.5" stroke="#a0a0a0" stroke-width="1"/>
<path d="M264.5 980V983.5" stroke="#a0a0a0" stroke-width="1"/>
<path d="M278.5 979.5V984.5" stroke="#b0b0b0" stroke-width="1"/>
<path d="M291.5 980V983.5" stroke="#a0a0a0" stroke-width="1"/>
<path d="M305.5 980V983.5" stroke="#a0a0a0" stroke-width="1"/>
<path d="M318.5 980V983.5" stroke="#a0a0a0" stroke-width="1"/>
<path d="M332.5 980V983.5" stroke="#a0a0a0" stroke-width="1"/>
<path d="M346.5 979.5V984.5" stroke="#b0b0b0" stroke-width="1"/>
<path d="M359.5 980V983.5" stroke="#a0a0a0" stroke-width="1"/>
<path d="M373.5 980V983.5" stroke="#a0a0a0" stroke-width="1"/>
<path d="M386.5 980V983.5" stroke="#a0a0a0" stroke-width="1"/>
<path d="M400.5 980V983.5" stroke="#a0a0a0" stroke-width="1"/>
<path d="M413.5 979.5V984.5" stroke="#b0b0b0" stroke-width="1"/>
<path d="M427.5 980V983.5" stroke="#a0a0a0" stroke-width="1"/>
<path d="M440.5 980V983.5" stroke="#a0a0a0" stroke-width="1"/>
<path d="M454.5 980V983.5" stroke="#a0a0a0" stroke-width="1"/>
<path d="M467.5 980V983.5" stroke="#a0a0a0" stroke-width="1"/>
<path d="M481.5 979.5V984.5" stroke="#b0b0b0" stroke-width="1"/>
<path d="M495.5 980V983.5" stroke="#a0a0a0" stroke-width="1"/>
<path d="M508.5 980V983.5" stroke="#a0a0a0" stroke-width="1"/>
<path d="M522.5 980V983.5" stroke="#a0a0a0" stroke-width="1"/>
<path d="M535.5 980V983.5" stroke="#a0a0a0" stroke-width="1"/>
<path d="M549.5 979.5V984.5" stroke="#b0b0b0" stroke-width="1"/>
<path d="M562.5 980V983.5" stroke="#a0a0a0" stroke-width="1"/>
<path d="M576.5 980V983.5" stroke="#a0a0a0" stroke-width="1"/>
<path d="M589.5 980V983.5" stroke="#a0a0a0" stroke-width="1"/>
<path d="M603.5 980V983.5" stroke="#a0a0a0" stroke-width="1"/>
<path d="M616.5 979.5V984.5" stroke="#b0b0b0" stroke-width="1"/>
<path d="M630.5 980V983.5" stroke="#a0a0a0" stroke-width="1"/>
<path d="M644.5 980V983.5" stroke="#a0a0a0" stroke-width="1"/>
<path d="M657.5 980V983.5" stroke="#a0a0a0" stroke-width="1"/>
<path d="M671.5 980V983.5" stroke="#a0a0a0" stroke-width="1"/>
<path d="M684.5 979.5V984.5" stroke="#b0b0b0" stroke-width="1"/>
<path d="M698.5 980V983.5" stroke="#a0a0a0" stroke-width="1"/>
<path d="M711.5 980V983.5" stroke="#a0a0a0" stroke-width="1"/>
<path d="M725.5 980V983.5" stroke="#a0a0a0" stroke-width="1"/>
<path d="M738.5 980V983.5" stroke="#a0a0a0" stroke-width="1"/>
<path d="M752.5 979.5V984.5" stroke="#b0b0b0" stroke-width="1"/>
<path d="M766.5 980V983.5" stroke="#a0a0a0" stroke-width="1"/>
<path d="M779.5 980V983.5" stroke="#a0a0a0" stroke-width="1"/>
<path d="M793.5 980V983.5" stroke="#a0a0a0" stroke-width="1"/>
<path d="M806.5 980V983.5" stroke="#a0a0a0" stroke-width="1"/>
<path d="M820.5 979.5V984.5" stroke="#b0b0b0" stroke-width="1"/>
<path d="M833.5 980V983.5" stroke="#a0a0a0" stroke-width="1"/>
<path d="M847.5 980V983.5" stroke="#a0a0a0" stroke-width="1"/>
<path d="M860.5 980V983.5" stroke="#a0a0a0" stroke-width="1"/>
<path d="M874.5 980V983.5" stroke="#a0a0a0" stroke-width="1"/>
<path d="M888.5 979.5V984.5" stroke="#b0b0b0" stroke-width="1"/>
<path d="M901.5 980V983.5" stroke="#a0a0a0" stroke-width="1"/>
<path d="M915.5 980V983.5" stroke="#a0a0a0" stroke-width="1"/>
<path d="M928.5 980V983.5" stroke="#a0a0a0" stroke-width="1"/>
<path d="M942.5 980V983.5" stroke="#a0a0a0" stroke-width="1"/>
<path d="M955.5 979.5V984.5" stroke="#b0b0b0" stroke-width="1"/>
<path d="M969.5 980V983.5" stroke="#a0a0a0" stroke-width="1"/>
<path d="M982.5 980V983.5" stroke="#a0a0a0" stroke-width="1"/>
<path d="M996.5 980V983.5" stroke="#a0a0a0" stroke-width="1"/>
<path d="M1009.5 980V983.5" stroke="#a0a0a0" stroke-width="1"/>
<path d="M1023.5 979.5V984.5" stroke="#b0b0b0" stroke-width="1"/>
<path d="M1037.5 980V983.5" stroke="#a0a0a0" stroke-width="1"/>
<path d="M1050.5 980V983.5" stroke="#a0a0a0" stroke-width="1"/>
<path d="M1064.5 980V983.5" stroke="#a0a0a0" stroke-width="1"/>
<path d="M1077.5 980V983.5" stroke="#a0a0a0" stroke-width="1"/>
<path d="M1091.5 979.5V984.5" stroke="#b0b0b0" stroke-width="1"/>
<path d="M1104.5 980V983.5" stroke="#a0a0a0" stroke-width="1"/>
<path d="M1118.5 980V983.5" stroke="#a0a0a0" stroke-width="1"/>
<path d="M1131.5 980V983.5" stroke="#a0a0a0" stroke-width="1"/>
<path d="M1145.5 980V983.5" stroke="#a0a0a0" stroke-width="1"/>
<path d="M1158.5 979.5V984.5" stroke="#b0b0b0" stroke-width="1"/>
<path d="M1172.5 980V983.5" stroke="#a0a0a0" stroke-width="1"/>
<path d="M1186.5 980V983.5" stroke="#a0a0a0" stroke-width="1"/>
<path d="M1199.5 980V983.5" stroke="#a0a0a0" stroke-width="1"/>
<path d="M1213.5 980V983.5" stroke="#a0a0a0" stroke-width="1"/>
<path d="M1226.5 979.5V984.5" stroke="#b0b0b0" stroke-width="1"/>
<path d="M1240.5 980V983.5" stroke="#a0a0a0" stroke-width="1"/>
<path d="M1253.5 980V983.5" stroke="#a0a0a0" stroke-width="1"/>
<path d="M1267.5 980V983.5" stroke="#a0a0a0" stroke-width="1"/>
<path d="M1280.5 980V983.5" stroke="#a0a0a0" stroke-width="1"/>
<path d="M1294.5 979.5V984.5" stroke="#b0b0b0" stroke-width="1"/>
<path d="M1308.5 980V983.5" stroke="#a0a0a0" stroke-width="1"/>
</g>
<path d="M481.5 957V984.5" stroke="#c4c4c4" stroke-width="1"/>
<path d="M888.5 957V984.5" stroke="#c4c4c4" stroke-width="1"/>
<path d="M1294.5 957V984.5" stroke="#c4c4c4" stroke-width="1"/>
<path d="M74.5 976V984.5" stroke="#e0e0e0" stroke-width="1"/>
<text x="85.0" y="970.0" font-size="14" fill="#7a7fdc" text-anchor="middle">0</text>
<text x="140.8" y="970.0" font-size="14" fill="#b4b4b4" text-anchor="middle">5</text>
<text x="208.5" y="970.0" font-size="14" fill="#b4b4b4" text-anchor="middle">10</text>
<text x="276.2" y="970.0" font-size="14" fill="#b4b4b4" text-anchor="middle">15</text>
<text x="344.0" y="970.0" font-size="14" fill="#b4b4b4" text-anchor="middle">20</text>
<text x="411.8" y="970.0" font-size="14" fill="#b4b4b4" text-anchor="middle">25</text>
<text x="479.5" y="970.0" font-size="14" fill="#b4b4b4" text-anchor="middle">30</text>
<text x="547.2" y="970.0" font-size="14" fill="#b4b4b4" text-anchor="middle">35</text>
<text x="615.0" y="970.0" font-size="14" fill="#b4b4b4" text-anchor="middle">40</text>
<text x="682.8" y="970.0" font-size="14" fill="#b4b4b4" text-anchor="middle">45</text>
<text x="750.5" y="970.0" font-size="14" fill="#b4b4b4" text-anchor="middle">50</text>
<text x="818.2" y="970.0" font-size="14" fill="#b4b4b4" text-anchor="middle">55</text>
<text x="886.0" y="970.0" font-size="14" fill="#b4b4b4" text-anchor="middle">60</text>
<text x="953.8" y="970.0" font-size="14" fill="#b4b4b4" text-anchor="middle">65</text>
<text x="1021.5" y="970.0" font-size="14" fill="#b4b4b4" text-anchor="middle">70</text>
<text x="1089.2" y="970.0" font-size="14" fill="#b4b4b4" text-anchor="middle">75</text>
<text x="1157.0" y="970.0" font-size="14" fill="#b4b4b4" text-anchor="middle">80</text>
<text x="1224.8" y="970.0" font-size="14" fill="#b4b4b4" text-anchor="middle">85</text>
<text x="1292.5" y="970.0" font-size="14" fill="#b4b4b4" text-anchor="middle">90</text>
<text x="103.0" y="1003.5" font-size="14" fill="#e0e0e0" text-anchor="middle">0 F</text>
<path d="M165.5 992v14M168.5 992v14M171.5 992v14M1198.5 992v14M1201.5 992v14M1204.5 992v14" stroke="#555" stroke-width="1"/>
<text x="179.0" y="1003.0" font-size="14" fill="#e0e0e0">0 F</text>
<text x="1163.0" y="1003.0" font-size="14" fill="#e0e0e0">90 F</text>
<text x="1264.0" y="1003.5" font-size="14" fill="#e0e0e0" text-anchor="middle">90 F</text>
<path d="M64 936.4L73.4 927.0L82.800 936.4L73.4 945.8Z" fill="none" stroke="#d0d0d0" stroke-width="2.200"/>
<g fill="none" stroke="#b8b8b8" stroke-width="1.500" stroke-linejoin="miter"><path d="M298.500 928.9V943.9" stroke-width="1.800"/><path d="M304.5 936.4L313.5 928.9V943.9Z"/><path d="M343.5 936.4L352.5 928.9V943.9Z"/><path d="M369.5 936.4L378.5 928.9V943.9Z"/><path d="M383 928.9V943.9" stroke-width="1.800"/><path d="M404.800 927.1999999999999L418.500 936.4L404.800 945.6Z" stroke-width="1.700"/><path d="M439.600 928.9V943.9" stroke-width="1.800"/><path d="M454 936.4L444.8 928.9V943.9Z"/><path d="M479.8 936.4L470.6 928.9V943.9Z"/><path d="M518.8 936.4L509.5 928.9V943.9Z"/><path d="M524 928.9V943.9" stroke-width="1.800"/></g><path d="M330.0 936.4L335.4 931.0L340.79999999999995 936.4L335.4 941.8ZM482.0 936.4L487.4 931.0L492.79999999999995 936.4L487.4 941.8Z" fill="#b8b8b8"/>
<g fill="none" stroke="#c4c4c4" stroke-width="1.700"><path d="M556.200 936.700V929.600H572M568 925.600L572.200 929.600L568 933.600"/><path d="M570.500 938V943.200H554.500M558.500 939.200L554.300 943.200L558.500 947.200"/></g>
<path d="M579.5 947V953H573.5Z" fill="#a0a0a0"/>
<text x="599.2" y="936.3" font-size="12.5" fill="#d0d0d0" text-anchor="middle">A</text>
<g fill="#d0d0d0"><rect x="587" y="940.700" width="2" height="4.800"/><rect x="592" y="940.700" width="2" height="4.800"/><rect x="597.300" y="940.700" width="2" height="4.800"/><rect x="603.300" y="940.700" width="7.400" height="4.800"/></g>
<path d="M614.5 947V953H608.5Z" fill="#a0a0a0"/>
<path d="M623.500 932.500H628L633.500 927.500V945.500L628 940.500H623.500Z" fill="none" stroke="#b8b8b8" stroke-width="1.700" stroke-linejoin="round"/><path d="M636.500 931.500a6.500 6.500 0 0 1 0 10M638 926.500a12 12 0 0 1 0 20" fill="none" stroke="#b8b8b8" stroke-width="1.800"/>
<circle cx="788.3" cy="936.3" r="10.800" fill="none" stroke="#e8705c" stroke-width="1.700"/><path d="M783.300 936.300L788.300 931.300L793.300 936.300L788.300 941.300Z" fill="#d0d0d0"/>
<path d="M804.5 947V953H798.5Z" fill="#a0a0a0"/>
<circle cx="823.3" cy="936.3" r="10.800" fill="none" stroke="#e8705c" stroke-width="1.700"/>
<text x="823.3" y="941.8" font-size="14.5" fill="#d0d0d0" text-anchor="middle">A</text>
<circle cx="858.3" cy="936.3" r="10.800" fill="none" stroke="#b8b8b8" stroke-width="1.700"/>
<g transform="translate(858.3 936.3)" fill="#b8b8b8"><circle r="4.59"/><rect x="-1.30" y="-6.20" width="2.60" height="3.10" rx="0.4" transform="rotate(0.0)"/><rect x="-1.30" y="-6.20" width="2.60" height="3.10" rx="0.4" transform="rotate(45.0)"/><rect x="-1.30" y="-6.20" width="2.60" height="3.10" rx="0.4" transform="rotate(90.0)"/><rect x="-1.30" y="-6.20" width="2.60" height="3.10" rx="0.4" transform="rotate(135.0)"/><rect x="-1.30" y="-6.20" width="2.60" height="3.10" rx="0.4" transform="rotate(180.0)"/><rect x="-1.30" y="-6.20" width="2.60" height="3.10" rx="0.4" transform="rotate(225.0)"/><rect x="-1.30" y="-6.20" width="2.60" height="3.10" rx="0.4" transform="rotate(270.0)"/><rect x="-1.30" y="-6.20" width="2.60" height="3.10" rx="0.4" transform="rotate(315.0)"/><circle r="2.00" fill="#383838"/></g>
<path d="M913.1 936.3L918.5 930.9L923.9 936.3L918.5 941.6999999999999Z" fill="#b8b8b8"/><g fill="none" stroke="#b8b8b8" stroke-width="1.500"><path d="M914.5 928.8L918.5 924.8L922.5 928.8M914.5 943.8L918.5 947.8L922.5 943.8M911.0 932.3L907.0 936.3L911.0 940.3M926.0 932.3L930.0 936.3L926.0 940.3"/></g>
<path d="M948.1 936.3L953.5 930.9L958.9 936.3L953.5 941.6999999999999Z" fill="#b8b8b8"/><g fill="none" stroke="#b8b8b8" stroke-width="1.600"><path d="M953.0 925.5C944.5 925.5 939.5 935.3 944.0 945.3"/><path d="M943.0 939.8V946.5H949.5"/><path d="M954.0 947.0999999999999C962.5 947.0999999999999 967.5 937.3 963.0 927.3"/><path d="M964.0 932.8V926.0999999999999H957.5"/></g>
<path d="M978.800 932V927H998.300V945.800H990" fill="none" stroke="#b8b8b8" stroke-width="1.700"/><path d="M978.300 940.800L983.700 935.400L989.100 940.800L983.700 946.200Z" fill="#b8b8b8"/>
<rect x="1013.300" y="928.800" width="21" height="6.600" rx="3.300" fill="#c4c4c4"/><circle cx="1016.800" cy="932.100" r="1.700" fill="#383838"/><rect x="1013.300" y="938.300" width="21" height="6.600" rx="3.300" fill="#c4c4c4"/><circle cx="1030.800" cy="941.600" r="1.700" fill="#383838"/>
<circle cx="1052.500" cy="942.500" r="3.700" fill="#c4c4c4"/><path d="M1056.500 931.500a3.800 3.800 0 0 1 7.400 1.500L1060 936.500Z" fill="#c4c4c4"/><path d="M1062 942.500C1063.500 945 1066 945.500 1067.500 944.500" fill="none" stroke="#c4c4c4" stroke-width="1.400"/><path d="M1048.300 927.500L1069.200 946.300" stroke="#c4c4c4" stroke-width="1.700"/>
<g fill="none" stroke="#d0d0d0" stroke-width="1.700"><path d="M1281.500 925.500V946.500H1302"/><path d="M1278 929.500L1281.500 925.500L1285 929.500M1298 943L1302 946.500L1298 950"/><path d="M1284 944L1299 928.500M1293 928H1299.500V934.500"/></g>
</svg>
</section>
<section id="frame">
<div style="left:0px;top:1011px;width:1921px;height:4px;background:#1e1e1e;"></div>
<div style="left:1919.7px;top:0px;width:1.3px;height:1015px;background:#1e1e1e;"></div>
<svg class="ov" width="1921" height="1015" viewBox="0 0 1921 1015">

</svg>
</section>
</div>
</body></html>
